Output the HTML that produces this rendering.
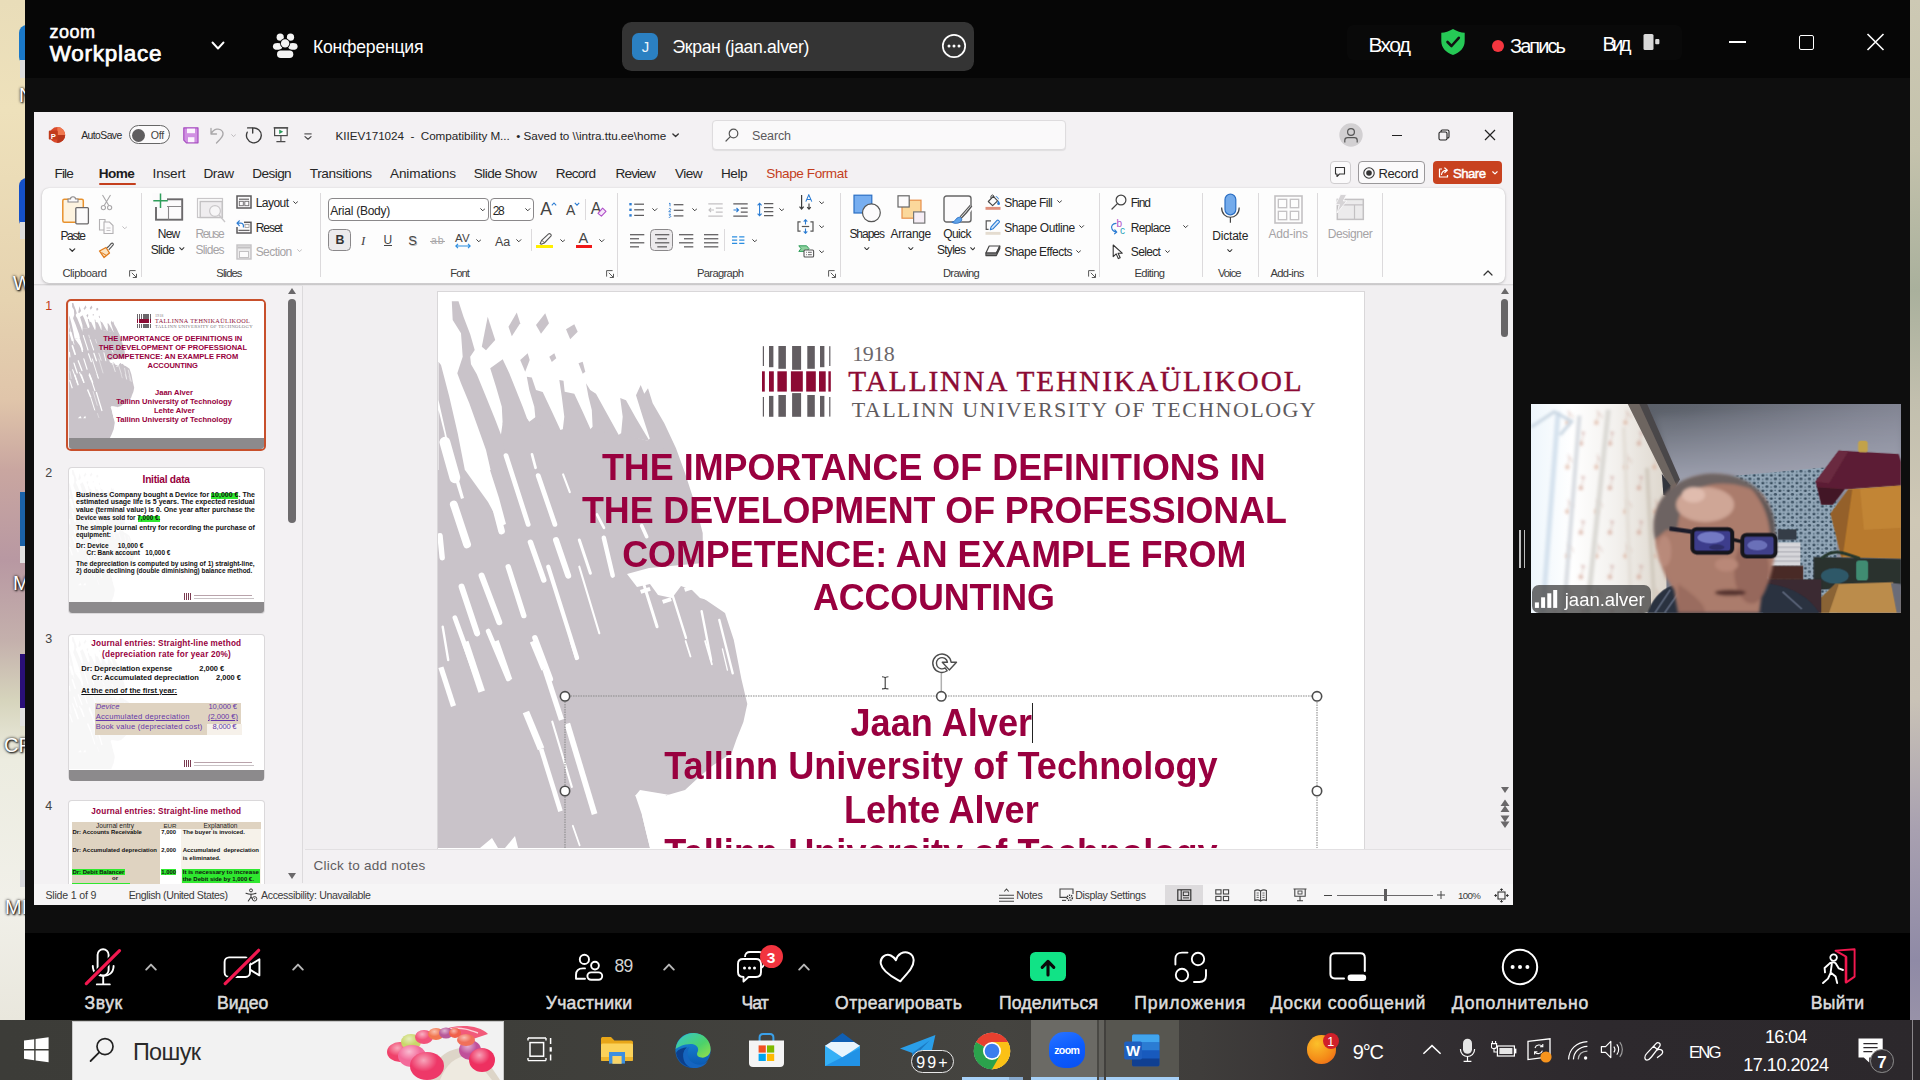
<!DOCTYPE html>
<html lang="ru"><head><meta charset="utf-8"><title>Zoom Workplace</title>
<style>
html,body{margin:0;padding:0}
body{width:1920px;height:1080px;overflow:hidden;position:relative;background:#0e0e0e;font-family:"Liberation Sans","Noto Sans CJK SC",sans-serif;}
.a{position:absolute;display:block}
.t{position:absolute;white-space:pre;}
</style></head>
<body>
<!-- p_zoom -->
<div class="a" style="left:0px;top:0px;width:26px;height:1020px;background:linear-gradient(180deg,#e9ddb9 0px,#eee1bb 110px,#e6d3b0 300px,#e0c5aa 400px,#c9a6a0 470px,#b898a2 560px,#c4b0ac 640px,#d6d4bc 700px,#ecece0 760px,#f1f0e9 900px,#e9e7dd 1020px);"></div>
<div class="a" style="left:1908px;top:0px;width:12px;height:1020px;background:linear-gradient(180deg,#cdc9b4 0px,#c4c2ac 150px,#a9b09c 290px,#c2bfae 400px,#cfc8b6 520px,#c9c2b6 700px,#a8a0b0 830px,#8f8aa6 960px,#9892a8 1020px);"></div>
<div class="a" style="left:19px;top:25px;width:8px;height:40px;background:#1a78c8;border-radius:8px 0 0 8px;"></div>
<div class="a" style="left:20px;top:60px;width:6px;height:18px;background:#dcdcdc;"></div>
<div class="t" style="left:19.00px;top:85px;font-size:20px;line-height:20px;color:#fff;text-shadow:0 0 3px #000,1px 1px 2px #000;">N</div>
<div class="a" style="left:19px;top:178px;width:8px;height:50px;background:#1450c8;border-radius:8px 0 0 8px;"></div>
<div class="a" style="left:20px;top:222px;width:6px;height:17px;background:#dcdcdc;"></div>
<div class="t" style="left:13.00px;top:273px;font-size:20px;line-height:20px;color:#fff;text-shadow:0 0 3px #000,1px 1px 2px #000;">W</div>
<div class="a" style="left:20px;top:492px;width:6px;height:54px;background:#1b62a8;"></div>
<div class="a" style="left:20px;top:546px;width:6px;height:17px;background:#e0e0e0;"></div>
<div class="t" style="left:13.00px;top:573px;font-size:20px;line-height:20px;color:#fff;text-shadow:0 0 3px #000,1px 1px 2px #000;">M</div>
<div class="a" style="left:20px;top:654px;width:6px;height:54px;background:#2a0f78;"></div>
<div class="a" style="left:20px;top:708px;width:6px;height:18px;background:#e0e0e0;"></div>
<div class="t" style="left:4.00px;top:735px;font-size:20px;line-height:20px;color:#fff;text-shadow:0 0 3px #000,1px 1px 2px #000;">CP</div>
<div class="a" style="left:20px;top:870px;width:6px;height:17px;background:#d8d8dc;"></div>
<div class="t" style="left:5.00px;top:897px;font-size:20px;line-height:20px;color:#fff;text-shadow:0 0 3px #000,1px 1px 2px #000;">MI</div>
<div class="a" style="left:25px;top:0px;width:1885px;height:1020px;background:#0e0e0e;"></div>
<div class="a" style="left:25px;top:0px;width:1885px;height:78px;background:#060606;"></div>
<div class="a" style="left:25px;top:933px;width:1885px;height:87px;background:#000;"></div>
<div class="t" style="left:49.50px;top:23px;font-size:18px;line-height:18px;color:#fff;letter-spacing:0.494px;-webkit-text-stroke:.55px #fff;">zoom</div>
<div class="t" style="left:49.80px;top:42px;font-size:22.4px;line-height:23px;color:#fff;letter-spacing:0.799px;-webkit-text-stroke:.75px #fff;">Workplace</div>
<svg class="a" style="left:210px;top:40px;" width="16" height="12" viewBox="0 0 16 12"><path d="M2.5 2.5 L8 8.5 L13.5 2.5" fill="none" stroke="#fff" stroke-width="1.9" stroke-linecap="round" stroke-linejoin="round"/></svg>
<svg class="a" style="left:272px;top:32px;" width="26" height="28" viewBox="0 0 26 28"><g fill="#f4f4f4"><circle cx="8.2" cy="5.2" r="3.6"/><circle cx="18.5" cy="5.2" r="3.6"/><ellipse cx="5.6" cy="14.4" rx="4.7" ry="3.4"/><ellipse cx="20.9" cy="14.4" rx="4.7" ry="3.4"/><circle cx="13.1" cy="11.4" r="5" fill="#060606"/><circle cx="13.1" cy="11.4" r="4.2"/><rect x="4.3" y="17.6" width="17.8" height="9" rx="4.5" fill="#060606"/><rect x="5" y="18.4" width="16.3" height="7.5" rx="3.75"/></g></svg>
<div class="t" style="left:313.00px;top:38px;font-size:17.6px;line-height:18px;color:#fff;letter-spacing:-0.227px;">Конференция</div>
<div class="a" style="left:622.3px;top:22px;width:351.5px;height:49px;background:#343434;border-radius:9.5px;"></div>
<div class="a" style="left:632.3px;top:33.4px;width:26.2px;height:26.4px;background:#2b80c2;border-radius:6.5px;"></div>
<div class="t" style="left:641.65px;top:39px;font-size:15px;line-height:15px;color:#eef4fa;">J</div>
<div class="t" style="left:672.50px;top:38px;font-size:17.6px;line-height:18px;color:#fff;letter-spacing:-0.328px;">Экран (jaan.alver)</div>
<svg class="a" style="left:940.7px;top:32.8px;" width="26" height="26" viewBox="0 0 26 26"><circle cx="13" cy="13" r="11.2" fill="none" stroke="#fff" stroke-width="1.7"/><circle cx="8" cy="13" r="1.5" fill="#fff"/><circle cx="13" cy="13" r="1.5" fill="#fff"/><circle cx="18" cy="13" r="1.5" fill="#fff"/></svg>
<div class="a" style="left:1347px;top:25px;width:335px;height:35px;background:#090909;border-radius:6px;"></div>
<div class="t" style="left:1368.50px;top:34px;font-size:21px;line-height:21px;color:#fff;letter-spacing:-1.669px;">Вход</div>
<svg class="a" style="left:1440px;top:28px;" width="26" height="28" viewBox="0 0 26 28"><path d="M13 1 C9 3.5 5 4.5 1.3 4.8 V13 C1.3 20 6 24.5 13 27 C20 24.5 24.7 20 24.7 13 V4.8 C21 4.5 17 3.5 13 1 Z" fill="#26c956"/><path d="M7.5 14 L11.5 18 L18.8 9.8" fill="none" stroke="#111" stroke-width="2.6" stroke-linecap="round" stroke-linejoin="round"/></svg>
<div class="a" style="left:1491.5px;top:39.5px;width:12px;height:12px;background:#f5363f;border-radius:50%;"></div>
<div class="t" style="left:1510.00px;top:36px;font-size:20px;line-height:20px;color:#fff;letter-spacing:-1.925px;">Запись</div>
<div class="t" style="left:1602.50px;top:34px;font-size:20px;line-height:20px;color:#fff;letter-spacing:-3.591px;">Вид</div>
<svg class="a" style="left:1643px;top:33px;" width="18" height="18" viewBox="0 0 18 18"><rect x="0.5" y="1" width="10" height="16" rx="1.5" fill="#d9d9d9"/><rect x="12.2" y="6" width="4.2" height="5.2" rx="1" fill="#d9d9d9"/></svg>
<div class="a" style="left:1728.5px;top:41.3px;width:17.5px;height:1.6px;background:#fff;"></div>
<div class="a" style="left:1799px;top:34.5px;width:15px;height:15px;background:transparent;border:1.6px solid #fff;border-radius:2px;box-sizing:border-box;"></div>
<svg class="a" style="left:1866px;top:33px;" width="20" height="18" viewBox="0 0 20 18"><path d="M1.5 1 L17.5 17 M17.5 1 L1.5 17" stroke="#fff" stroke-width="1.6" fill="none"/></svg>
<!-- p_ppt -->
<div class="a" style="left:34px;top:112px;width:1479px;height:793px;background:#f3f1f3;"></div>
<svg class="a" style="left:48px;top:126px;" width="18" height="18" viewBox="0 0 18 18"><circle cx="9.3" cy="9" r="7.9" fill="#d9492a"/><path d="M9.3 1.1 A7.9 7.9 0 0 1 17.2 9 H9.3 Z" fill="#f0784f"/><path d="M9.3 16.9 A7.9 7.9 0 0 0 17.2 9 H9.3 Z" fill="#b8371c"/><rect x="0.8" y="4.6" width="9" height="9" rx="1.2" fill="#c13b1b"/></svg><div class="t" style="left:50.77px;top:132px;font-size:7.6px;line-height:9px;color:#fff;font-weight:700;">P</div>
<div class="t" style="left:81.20px;top:130px;font-size:10.4px;line-height:11px;color:#262626;letter-spacing:-0.571px;">AutoSave</div>
<div class="a" style="left:129px;top:125px;width:41px;height:18.6px;background:#fbfafb;border:1.2px solid #666;border-radius:10px;box-sizing:border-box;"></div>
<div class="a" style="left:132.2px;top:128.5px;width:13px;height:13px;background:#5f5d5f;border-radius:50%;"></div>
<div class="t" style="left:150.70px;top:129px;font-size:10.6px;line-height:12px;color:#444;letter-spacing:-0.222px;">Off</div>
<svg class="a" style="left:182.5px;top:126.6px;" width="16" height="17" viewBox="0 0 16 17"><path d="M.8 .8 H15 V15.8 H3.4 L.8 13.2 Z" fill="#d08fe2" stroke="#a64dc0" stroke-width="1.2" stroke-linejoin="round"/><rect x="4" y="1.6" width="8" height="4.6" fill="#fbf3fd"/><rect x="5" y="10.2" width="6.4" height="5" fill="#fbf3fd"/></svg>
<svg class="a" style="left:209px;top:126px;" width="17" height="18" viewBox="0 0 17 18"><path d="M2 2.5 V8 H7.5 M2.2 7.8 C4.5 2.5 11 1.5 13.5 5.5 C15.5 9 12 12.5 7.5 17" fill="none" stroke="#a9a7a9" stroke-width="1.3" stroke-linecap="round" stroke-linejoin="round"/></svg>
<svg class="a" style="left:230.88px;top:133.86px;" width="5.248" height="3.2800000000000002" viewBox="0 0 8 5"><path d="M1 1 L4 4 L7 1" fill="none" stroke="#b5b3b5" stroke-width="1.38" stroke-linecap="round" stroke-linejoin="round"/></svg>
<svg class="a" style="left:244px;top:125px;" width="20" height="20" viewBox="0 0 20 20"><path d="M8.6 3.1 A7.4 7.4 0 1 1 3.2 7.2" fill="none" stroke="#3b3b3b" stroke-width="1.35" stroke-linecap="round"/><path d="M3.6 2.9 H8.7 V8" fill="none" stroke="#3b3b3b" stroke-width="1.35" stroke-linecap="round" stroke-linejoin="round"/></svg>
<svg class="a" style="left:272px;top:126px;" width="18" height="18" viewBox="0 0 18 18"><rect x="2.6" y="1.8" width="12.6" height="7.8" fill="#fbfafb" stroke="#4b4b4b" stroke-width="1.2"/><path d="M1.6 1.8 H16.2 M8.9 9.6 V15.4 M4.4 15.6 H13.4" stroke="#4b4b4b" stroke-width="1.2" fill="none"/><path d="M7.2 3.4 L11.2 5.7 L7.2 8 Z" fill="#2a9a5a"/></svg>
<svg class="a" style="left:302.5px;top:131.5px;" width="10" height="9" viewBox="0 0 10 9"><path d="M1.4 1.9 H8.6" stroke="#444" stroke-width="1.1"/><path d="M2 4.6 L5 7.2 L8 4.6" fill="none" stroke="#444" stroke-width="1.2" stroke-linejoin="round" stroke-linecap="round"/></svg>
<div class="t" style="left:335.50px;top:129px;font-size:11.7px;line-height:13px;color:#262626;letter-spacing:-0.033px;">KIIEV171024  -  Compatibility M...  • Saved to \\intra.ttu.ee\home</div>
<svg class="a" style="left:671.89px;top:133.25px;" width="7.216" height="4.51" viewBox="0 0 8 5"><path d="M1 1 L4 4 L7 1" fill="none" stroke="#333" stroke-width="1.4949999999999999" stroke-linecap="round" stroke-linejoin="round"/></svg>
<div class="a" style="left:711.5px;top:120px;width:354.5px;height:30px;background:#faf9fa;border:1px solid #dedcde;border-radius:4px;box-sizing:border-box;box-shadow:0 1px 1px rgba(0,0,0,.08);"></div>
<svg class="a" style="left:725px;top:128px;" width="14" height="14" viewBox="0 0 14 14"><circle cx="8.5" cy="5.5" r="4.3" fill="none" stroke="#555" stroke-width="1.2"/><path d="M5.3 8.7 L1 13" stroke="#555" stroke-width="1.2" stroke-linecap="round"/></svg>
<div class="t" style="left:752.00px;top:130px;font-size:12.5px;line-height:12px;color:#5c5a5c;letter-spacing:-0.121px;">Search</div>
<svg class="a" style="left:1339px;top:123px;" width="24" height="24" viewBox="0 0 24 24"><circle cx="12" cy="12" r="11.7" fill="#d2d0d2"/><circle cx="12" cy="9" r="3.4" fill="none" stroke="#555" stroke-width="1.2"/><path d="M5.8 19.5 V17.3 C5.8 15.5 7 14.6 8.6 14.6 H15.4 C17 14.6 18.2 15.5 18.2 17.3 V19.5" fill="none" stroke="#555" stroke-width="1.2"/></svg>
<div class="a" style="left:1392px;top:134.5px;width:10px;height:1.2px;background:#222;"></div>
<svg class="a" style="left:1438px;top:129px;" width="12" height="12" viewBox="0 0 12 12"><rect x="1" y="3" width="8" height="8" rx="1.5" fill="none" stroke="#222" stroke-width="1.1"/><path d="M3 3 V2.3 C3 1.5 3.5 1 4.3 1 H9.5 C10.4 1 11 1.6 11 2.5 V7.7 C11 8.5 10.5 9 9.7 9 H9" fill="none" stroke="#222" stroke-width="1.1"/></svg>
<svg class="a" style="left:1484px;top:129px;" width="12" height="12" viewBox="0 0 12 12"><path d="M1 1 L11 11 M11 1 L1 11" stroke="#222" stroke-width="1.2"/></svg>
<div class="t" style="left:54.60px;top:166px;font-size:13.6px;line-height:15px;color:#262626;letter-spacing:-0.905px;">File</div>
<div class="t" style="left:152.60px;top:166px;font-size:13.6px;line-height:15px;color:#262626;letter-spacing:-0.223px;">Insert</div>
<div class="t" style="left:203.40px;top:166px;font-size:13.6px;line-height:15px;color:#262626;letter-spacing:-0.379px;">Draw</div>
<div class="t" style="left:252.30px;top:166px;font-size:13.6px;line-height:15px;color:#262626;letter-spacing:-0.587px;">Design</div>
<div class="t" style="left:309.70px;top:166px;font-size:13.6px;line-height:15px;color:#262626;letter-spacing:-0.351px;">Transitions</div>
<div class="t" style="left:390.00px;top:166px;font-size:13.6px;line-height:15px;color:#262626;letter-spacing:-0.142px;">Animations</div>
<div class="t" style="left:473.80px;top:166px;font-size:13.6px;line-height:15px;color:#262626;letter-spacing:-0.538px;">Slide Show</div>
<div class="t" style="left:555.80px;top:166px;font-size:13.6px;line-height:15px;color:#262626;letter-spacing:-0.729px;">Record</div>
<div class="t" style="left:615.50px;top:166px;font-size:13.6px;line-height:15px;color:#262626;letter-spacing:-0.859px;">Review</div>
<div class="t" style="left:675.00px;top:166px;font-size:13.6px;line-height:15px;color:#262626;letter-spacing:-0.511px;">View</div>
<div class="t" style="left:721.00px;top:166px;font-size:13.6px;line-height:15px;color:#262626;letter-spacing:-0.457px;">Help</div>
<div class="t" style="left:98.70px;top:166px;font-size:13.6px;line-height:15px;color:#1c1c1c;font-weight:700;letter-spacing:-0.562px;">Home</div>
<div class="a" style="left:99px;top:182.9px;width:36.8px;height:2.1px;background:#c43e1c;border-radius:1px;"></div>
<div class="t" style="left:766.30px;top:166px;font-size:13.6px;line-height:15px;color:#c43e1c;letter-spacing:-0.434px;">Shape Format</div>
<div class="a" style="left:1329.5px;top:161px;width:21px;height:23px;background:#fbfafb;border:1px solid #cfcdcf;border-radius:4px;box-sizing:border-box;"></div>
<svg class="a" style="left:1334px;top:166px;" width="12" height="12" viewBox="0 0 12 12"><path d="M1.5 1.5 H10.5 V8 H5.5 L3 10.5 V8 H1.5 Z" fill="none" stroke="#333" stroke-width="1.1" stroke-linejoin="round"/></svg>
<div class="a" style="left:1358px;top:161px;width:67px;height:23px;background:#fbfafb;border:1px solid #9a989a;border-radius:4px;box-sizing:border-box;"></div>
<svg class="a" style="left:1363px;top:167px;" width="12" height="12" viewBox="0 0 12 12"><circle cx="6" cy="6" r="5.2" fill="none" stroke="#333" stroke-width="1.1"/><circle cx="6" cy="6" r="2.8" fill="#333"/></svg>
<div class="t" style="left:1378.50px;top:167px;font-size:13px;line-height:13px;color:#262626;letter-spacing:-0.382px;">Record</div>
<div class="a" style="left:1433px;top:161px;width:68.5px;height:23px;background:#c8421f;border-radius:4px;"></div>
<svg class="a" style="left:1437px;top:166px;" width="13" height="13" viewBox="0 0 13 13"><path d="M5 3 H2.5 V11 H10.5 V9" fill="none" stroke="#fff" stroke-width="1.2" stroke-linejoin="round"/><path d="M4.5 8.5 C5 5.5 7 4.3 9.3 4.3 M7.8 2 L10.3 4.3 L7.8 6.6" fill="none" stroke="#fff" stroke-width="1.2" stroke-linecap="round" stroke-linejoin="round"/></svg>
<div class="t" style="left:1453.00px;top:167px;font-size:13.2px;line-height:13px;color:#fff;letter-spacing:-0.556px;-webkit-text-stroke:.45px #fff;">Share</div>
<svg class="a" style="left:1491.75px;top:171.46px;" width="5.904" height="3.69" viewBox="0 0 8 5"><path d="M1 1 L4 4 L7 1" fill="none" stroke="#fff" stroke-width="1.4949999999999999" stroke-linecap="round" stroke-linejoin="round"/></svg>
<div class="a" style="left:41.5px;top:188px;width:1463px;height:95px;background:#fdfdfd;border-radius:7px;box-shadow:0 1px 3px rgba(0,0,0,.22),0 0 1px rgba(0,0,0,.15);"></div>
<div class="a" style="left:140.5px;top:193px;width:1px;height:84px;background:#dcdadc;"></div>
<div class="a" style="left:319.5px;top:193px;width:1px;height:84px;background:#dcdadc;"></div>
<div class="a" style="left:617px;top:193px;width:1px;height:84px;background:#dcdadc;"></div>
<div class="a" style="left:839.5px;top:193px;width:1px;height:84px;background:#dcdadc;"></div>
<div class="a" style="left:1099px;top:193px;width:1px;height:84px;background:#dcdadc;"></div>
<div class="a" style="left:1202.4px;top:193px;width:1px;height:84px;background:#dcdadc;"></div>
<div class="a" style="left:1258px;top:193px;width:1px;height:84px;background:#dcdadc;"></div>
<div class="a" style="left:1317px;top:193px;width:1px;height:84px;background:#dcdadc;"></div>
<div class="a" style="left:1382px;top:193px;width:1px;height:84px;background:#dcdadc;"></div>
<div class="t" style="left:62.40px;top:267px;font-size:11.2px;line-height:12px;color:#3a3a3a;letter-spacing:-0.418px;">Clipboard</div>
<div class="t" style="left:216.30px;top:267px;font-size:11.2px;line-height:12px;color:#3a3a3a;letter-spacing:-0.861px;">Slides</div>
<div class="t" style="left:450.30px;top:267px;font-size:11.2px;line-height:12px;color:#3a3a3a;letter-spacing:-0.904px;">Font</div>
<div class="t" style="left:697.00px;top:267px;font-size:11.2px;line-height:12px;color:#3a3a3a;letter-spacing:-0.663px;">Paragraph</div>
<div class="t" style="left:943.00px;top:267px;font-size:11.2px;line-height:12px;color:#3a3a3a;letter-spacing:-0.714px;">Drawing</div>
<div class="t" style="left:1134.50px;top:267px;font-size:11.2px;line-height:12px;color:#3a3a3a;letter-spacing:-0.624px;">Editing</div>
<div class="t" style="left:1218.00px;top:267px;font-size:11.2px;line-height:12px;color:#3a3a3a;letter-spacing:-0.975px;">Voice</div>
<div class="t" style="left:1270.40px;top:267px;font-size:11.2px;line-height:12px;color:#3a3a3a;letter-spacing:-0.663px;">Add-ins</div>
<svg class="a" style="left:128.7px;top:269.7px;" width="8" height="8" viewBox="0 0 8 8"><path d="M0.6 6.6 V0.6 H6.6 M2.8 2.8 L7.4 7.4 M7.5 3.8 V7.5 H3.8" fill="none" stroke="#5a5a5a" stroke-width="1"/></svg>
<svg class="a" style="left:605.7px;top:269.7px;" width="8" height="8" viewBox="0 0 8 8"><path d="M0.6 6.6 V0.6 H6.6 M2.8 2.8 L7.4 7.4 M7.5 3.8 V7.5 H3.8" fill="none" stroke="#5a5a5a" stroke-width="1"/></svg>
<svg class="a" style="left:827.7px;top:269.7px;" width="8" height="8" viewBox="0 0 8 8"><path d="M0.6 6.6 V0.6 H6.6 M2.8 2.8 L7.4 7.4 M7.5 3.8 V7.5 H3.8" fill="none" stroke="#5a5a5a" stroke-width="1"/></svg>
<svg class="a" style="left:1087.5px;top:269.7px;" width="8" height="8" viewBox="0 0 8 8"><path d="M0.6 6.6 V0.6 H6.6 M2.8 2.8 L7.4 7.4 M7.5 3.8 V7.5 H3.8" fill="none" stroke="#5a5a5a" stroke-width="1"/></svg>
<svg class="a" style="left:1483px;top:270px;" width="10" height="6" viewBox="0 0 10 6"><path d="M1 5 L5 1 L9 5" fill="none" stroke="#333" stroke-width="1.2" stroke-linecap="round" stroke-linejoin="round"/></svg>
<!-- p_ribbon -->
<svg class="a" style="left:61px;top:193px;" width="29" height="32" viewBox="0 0 29 32"><rect x="1.8" y="6.3" width="20.5" height="23" rx="1.5" fill="#fdf3e0" stroke="#e8922e" stroke-width="1.5"/><path d="M7 9 V6 H9.5 C9.5 3 14.5 3 14.5 6 H17 V9 Z" fill="#fcfbfc" stroke="#8a888a" stroke-width="1.1"/><rect x="14.8" y="14.6" width="12.6" height="16.2" rx="1" fill="#fcfbfc" stroke="#6a686a" stroke-width="1.3"/></svg>
<div class="t" style="left:60.40px;top:230px;font-size:12px;line-height:12px;color:#262626;letter-spacing:-1.272px;">Paste</div>
<svg class="a" style="left:69.22px;top:247.95px;" width="6.56" height="4.1" viewBox="0 0 8 5"><path d="M1 1 L4 4 L7 1" fill="none" stroke="#333" stroke-width="1.4949999999999999" stroke-linecap="round" stroke-linejoin="round"/></svg>
<svg class="a" style="left:100px;top:194px;" width="13" height="17" viewBox="0 0 13 17"><path d="M2.5 1 L8.8 11.5 M10.5 1 L4.2 11.5" stroke="#a9a7a9" stroke-width="1.1" fill="none"/><circle cx="3.4" cy="13.6" r="2.1" fill="none" stroke="#a9a7a9" stroke-width="1.1"/><circle cx="9.6" cy="13.6" r="2.1" fill="none" stroke="#a9a7a9" stroke-width="1.1"/></svg>
<svg class="a" style="left:98px;top:218px;" width="17" height="17" viewBox="0 0 17 17"><path d="M1.5 1.5 H7 V12 H1.5 Z" fill="none" stroke="#b3b1b3" stroke-width="1.1"/><path d="M6 4 H11.5 L15 7.5 V15.5 H6 Z" fill="#fcfbfc" stroke="#b3b1b3" stroke-width="1.1"/><path d="M8.5 10 H12.5 M8.5 12.5 H12.5" stroke="#c5c3c5" stroke-width="1"/></svg>
<svg class="a" style="left:121.51px;top:225.56px;" width="5.576" height="3.485" viewBox="0 0 8 5"><path d="M1 1 L4 4 L7 1" fill="none" stroke="#bdbbbd" stroke-width="1.38" stroke-linecap="round" stroke-linejoin="round"/></svg>
<svg class="a" style="left:98px;top:242px;" width="17" height="17" viewBox="0 0 17 17"><path d="M1.5 9 L8 5.5 L11.5 11 L6 15.5 Z" fill="#fbe3c0" stroke="#e07a1a" stroke-width="1.3" stroke-linejoin="round"/><path d="M3.5 10.5 L8.5 13.5" stroke="#e07a1a" stroke-width="1"/><path d="M9 6 L10.5 4.5 C11.5 3.5 12.5 2.2 13.6 1.3 C14.8 0.6 16 2 15 3.2 C14 4.3 12.8 5.4 11.8 6.6 L10.8 8" fill="#fcfbfc" stroke="#555" stroke-width="1.1" stroke-linejoin="round"/></svg>
<svg class="a" style="left:152px;top:192px;" width="32" height="29" viewBox="0 0 32 29"><rect x="4" y="7.3" width="26.2" height="20.4" fill="#fcfbfc" stroke="#6b696b" stroke-width="1.9"/><path d="M4 14.5 H30 M16.5 14.5 V27.5" stroke="#8a888a" stroke-width="1.1"/><rect x="0" y="1" width="15" height="14" fill="#fcfbfc"/><path d="M8.5 1.5 V16 M1.3 8.7 H15.8" stroke="#2f9e5b" stroke-width="1.5"/></svg>
<div class="t" style="left:157.80px;top:228px;font-size:12px;line-height:12px;color:#262626;letter-spacing:-0.803px;">New</div>
<div class="t" style="left:150.70px;top:244px;font-size:12px;line-height:12px;color:#262626;letter-spacing:-0.621px;">Slide</div>
<svg class="a" style="left:179.21px;top:247.46px;" width="5.576" height="3.485" viewBox="0 0 8 5"><path d="M1 1 L4 4 L7 1" fill="none" stroke="#333" stroke-width="1.4949999999999999" stroke-linecap="round" stroke-linejoin="round"/></svg>
<svg class="a" style="left:196px;top:197px;" width="31" height="28" viewBox="0 0 31 28"><rect x="1.5" y="1.5" width="25" height="19" fill="none" stroke="#c9c7c9" stroke-width="1.2"/><rect x="4.2" y="4.5" width="22" height="16" fill="#efedef" stroke="#c3c1c3" stroke-width="1.4"/><circle cx="19" cy="14" r="5.4" fill="#f7f6f7" stroke="#c9c7c9" stroke-width="1.2"/><path d="M23 18 L29 25" stroke="#c9c7c9" stroke-width="1.3"/></svg>
<div class="t" style="left:195.60px;top:228px;font-size:12px;line-height:12px;color:#a5a3a5;letter-spacing:-1.422px;">Reuse</div>
<div class="t" style="left:195.60px;top:244px;font-size:12px;line-height:12px;color:#a5a3a5;letter-spacing:-0.737px;">Slides</div>
<svg class="a" style="left:235.5px;top:194.5px;" width="16" height="14" viewBox="0 0 16 14"><rect x="1" y="1" width="14" height="12" fill="#fcfbfc" stroke="#5b595b" stroke-width="1.5"/><path d="M3 4.2 H13" stroke="#5b595b" stroke-width="1.1"/><rect x="3.3" y="6.3" width="4" height="4.4" fill="none" stroke="#6b696b" stroke-width=".9"/><rect x="8.8" y="6.3" width="4" height="4.4" fill="none" stroke="#6b696b" stroke-width=".9"/></svg>
<div class="t" style="left:255.70px;top:197px;font-size:12px;line-height:12px;color:#262626;letter-spacing:-0.546px;">Layout</div>
<svg class="a" style="left:292.68px;top:200.56px;" width="5.248" height="3.2800000000000002" viewBox="0 0 8 5"><path d="M1 1 L4 4 L7 1" fill="none" stroke="#333" stroke-width="1.4949999999999999" stroke-linecap="round" stroke-linejoin="round"/></svg>
<svg class="a" style="left:235.5px;top:219px;" width="16" height="15" viewBox="0 0 16 15"><rect x="1" y="3.3" width="14" height="10.7" fill="#fcfbfc" stroke="#5b595b" stroke-width="1.5"/><rect x="0" y="0" width="8" height="8" fill="#fcfbfc"/><path d="M2.5 11.4 H13.5" stroke="#6b696b" stroke-width="1.3"/><path d="M1.3 4.2 H5 C7.3 4.2 7.6 6.5 7.4 8 M3.3 1.8 L1 4.2 L3.3 6.6" fill="none" stroke="#2b7cd3" stroke-width="1.2" stroke-linejoin="round" stroke-linecap="round"/><rect x="9" y="5.5" width="4" height="3" fill="none" stroke="#9a989a" stroke-width=".8"/></svg>
<div class="t" style="left:255.70px;top:222px;font-size:12px;line-height:12px;color:#262626;letter-spacing:-1.037px;">Reset</div>
<svg class="a" style="left:235.5px;top:243.5px;" width="16" height="16" viewBox="0 0 16 16"><rect x="1" y="1" width="14" height="14" fill="#ecebec" stroke="#c3c1c3" stroke-width="1.4"/><path d="M1.5 3.5 H14.5" stroke="#c3c1c3" stroke-width="2"/><rect x="3.5" y="7.5" width="9" height="6" fill="#fcfbfc" stroke="#c3c1c3" stroke-width="1"/></svg>
<div class="t" style="left:255.70px;top:246px;font-size:12px;line-height:12px;color:#a5a3a5;letter-spacing:-0.571px;">Section</div>
<svg class="a" style="left:296.78px;top:249.26px;" width="5.248" height="3.2800000000000002" viewBox="0 0 8 5"><path d="M1 1 L4 4 L7 1" fill="none" stroke="#bdbbbd" stroke-width="1.4949999999999999" stroke-linecap="round" stroke-linejoin="round"/></svg>
<div class="a" style="left:327.5px;top:198.2px;width:161px;height:22.6px;background:#fff;border:1px solid #8a888a;border-radius:4px;box-sizing:border-box;"></div>
<div class="t" style="left:330.30px;top:205px;font-size:12px;line-height:12px;color:#262626;letter-spacing:-0.244px;">Arial (Body)</div>
<svg class="a" style="left:479.71px;top:208.26px;" width="5.576" height="3.485" viewBox="0 0 8 5"><path d="M1 1 L4 4 L7 1" fill="none" stroke="#333" stroke-width="1.38" stroke-linecap="round" stroke-linejoin="round"/></svg>
<div class="a" style="left:490.3px;top:198.2px;width:43.3px;height:22.6px;background:#fff;border:1px solid #8a888a;border-radius:4px;box-sizing:border-box;"></div>
<div class="t" style="left:492.80px;top:205px;font-size:12px;line-height:12px;color:#262626;letter-spacing:-1.448px;">28</div>
<svg class="a" style="left:525.21px;top:208.26px;" width="5.576" height="3.485" viewBox="0 0 8 5"><path d="M1 1 L4 4 L7 1" fill="none" stroke="#333" stroke-width="1.38" stroke-linecap="round" stroke-linejoin="round"/></svg>
<div class="t" style="left:540.20px;top:200px;font-size:17.5px;line-height:18px;color:#444;">A</div>
<svg class="a" style="left:550.5px;top:202.3px;" width="6" height="4" viewBox="0 0 6 4"><path d="M.8 3.4 L3 1 L5.2 3.4" fill="none" stroke="#2b7cd3" stroke-width="1.1"/></svg>
<div class="t" style="left:566.00px;top:203px;font-size:14px;line-height:14px;color:#444;">A</div>
<svg class="a" style="left:574.3px;top:201.8px;" width="6" height="4" viewBox="0 0 6 4"><path d="M.8 .8 L3 3.2 L5.2 .8" fill="none" stroke="#2b7cd3" stroke-width="1.1"/></svg>
<div class="a" style="left:585.3px;top:199px;width:1px;height:21px;background:#dcdadc;"></div>
<div class="t" style="left:590.80px;top:200px;font-size:16px;line-height:17px;color:#444;">A</div>
<svg class="a" style="left:597px;top:207px;" width="10" height="10" viewBox="0 0 10 10"><path d="M1 6.3 L5.6 1.2 L9 4.4 L4.4 9.2 Z" fill="#f6e6fa" stroke="#b04fc8" stroke-width="1.1" stroke-linejoin="round"/></svg>
<div class="a" style="left:327.5px;top:229.4px;width:23.3px;height:22px;background:#eceaec;border:1px solid #8a888a;border-radius:4.5px;box-sizing:border-box;"></div>
<div class="t" style="left:335.40px;top:234px;font-size:12.3px;line-height:12px;color:#333;font-weight:700;">B</div>
<div class="t" style="left:361.00px;top:234px;font-size:13px;line-height:13px;color:#444;font-family:'Liberation Serif',serif;font-style:italic;">I</div>
<div class="t" style="left:383.60px;top:234px;font-size:12px;line-height:12px;color:#444;">U</div>
<div class="a" style="left:383.5px;top:245.3px;width:8.7px;height:1px;background:#444;"></div>
<div class="t" style="left:408.20px;top:234px;font-size:13px;line-height:13px;color:#444;text-shadow:.8px .8px 0 #bbb;">S</div>
<div class="t" style="left:431.00px;top:235px;font-size:10.5px;line-height:10px;color:#a9a7a9;letter-spacing:0.820px;">ab</div>
<div class="a" style="left:430px;top:240.5px;width:15px;height:1px;background:#a9a7a9;"></div>
<div class="t" style="left:455.00px;top:232px;font-size:11.5px;line-height:12px;color:#444;letter-spacing:0.212px;">AV</div>
<svg class="a" style="left:454.5px;top:242.5px;" width="16" height="6" viewBox="0 0 16 6"><path d="M1 3 H15 M3 .8 L.8 3 L3 5.2 M13 .8 L15.2 3 L13 5.2" fill="none" stroke="#2b8de0" stroke-width="1.1"/></svg>
<svg class="a" style="left:475.81px;top:239.16px;" width="5.576" height="3.485" viewBox="0 0 8 5"><path d="M1 1 L4 4 L7 1" fill="none" stroke="#333" stroke-width="1.38" stroke-linecap="round" stroke-linejoin="round"/></svg>
<div class="t" style="left:495.00px;top:236px;font-size:12.5px;line-height:12px;color:#444;letter-spacing:0.010px;">Aa</div>
<svg class="a" style="left:516.01px;top:239.16px;" width="5.576" height="3.485" viewBox="0 0 8 5"><path d="M1 1 L4 4 L7 1" fill="none" stroke="#333" stroke-width="1.38" stroke-linecap="round" stroke-linejoin="round"/></svg>
<div class="a" style="left:531.4px;top:229.4px;width:1px;height:22px;background:#dcdadc;"></div>
<svg class="a" style="left:538px;top:232.5px;" width="15" height="12" viewBox="0 0 15 12"><path d="M2.2 10.6 L3.6 7.4 L10.6 .9 C11.8 0 13.9 1.8 12.9 3.1 L6.3 10 L3.2 11.2 Z" fill="#fcfbfc" stroke="#555" stroke-width="1.1" stroke-linejoin="round"/><path d="M3.8 7.2 L6.4 9.8" stroke="#555" stroke-width="1"/></svg>
<div class="a" style="left:536.4px;top:244.7px;width:16.4px;height:3.5px;background:#ffef00;"></div>
<svg class="a" style="left:559.71px;top:239.16px;" width="5.576" height="3.485" viewBox="0 0 8 5"><path d="M1 1 L4 4 L7 1" fill="none" stroke="#333" stroke-width="1.38" stroke-linecap="round" stroke-linejoin="round"/></svg>
<div class="t" style="left:578.60px;top:231px;font-size:14.5px;line-height:14px;color:#444;">A</div>
<div class="a" style="left:576.2px;top:244.7px;width:15.7px;height:3.5px;background:#f01818;"></div>
<svg class="a" style="left:599.21px;top:239.16px;" width="5.576" height="3.485" viewBox="0 0 8 5"><path d="M1 1 L4 4 L7 1" fill="none" stroke="#333" stroke-width="1.38" stroke-linecap="round" stroke-linejoin="round"/></svg>
<svg class="a" style="left:629px;top:202px;" width="16" height="15" viewBox="0 0 16 15"><rect x="0.3" y="1.0" width="2.4" height="2.4" fill="#2b7cd3"/><path d="M5.2 2.2 H15" stroke="#5d5b5d" stroke-width="1.25"/><rect x="0.3" y="6.6" width="2.4" height="2.4" fill="#2b7cd3"/><path d="M5.2 7.8 H15" stroke="#5d5b5d" stroke-width="1.25"/><rect x="0.3" y="12.2" width="2.4" height="2.4" fill="#2b7cd3"/><path d="M5.2 13.4 H15" stroke="#5d5b5d" stroke-width="1.25"/></svg>
<svg class="a" style="left:652.41px;top:208.46px;" width="5.576" height="3.485" viewBox="0 0 8 5"><path d="M1 1 L4 4 L7 1" fill="none" stroke="#333" stroke-width="1.38" stroke-linecap="round" stroke-linejoin="round"/></svg>
<svg class="a" style="left:668px;top:201.5px;" width="16" height="16" viewBox="0 0 16 16"><path d="M5.8 2.7 H15.4" stroke="#5d5b5d" stroke-width="1.25"/><path d="M5.8 8.3 H15.4" stroke="#5d5b5d" stroke-width="1.25"/><path d="M5.8 13.9 H15.4" stroke="#5d5b5d" stroke-width="1.25"/><path d="M1 1.8 L2 1 V4.3" fill="none" stroke="#2b7cd3" stroke-width=".9"/><path d="M.8 7 C1.4 6 3 6.3 2.6 7.6 L.8 9.8 H3" fill="none" stroke="#2b7cd3" stroke-width=".9"/><path d="M.8 12.2 H2.6 L1.6 13.6 C3.2 13.6 3.2 15.6 .8 15.4" fill="none" stroke="#2b7cd3" stroke-width=".9"/></svg>
<svg class="a" style="left:691.61px;top:208.46px;" width="5.576" height="3.485" viewBox="0 0 8 5"><path d="M1 1 L4 4 L7 1" fill="none" stroke="#333" stroke-width="1.38" stroke-linecap="round" stroke-linejoin="round"/></svg>
<svg class="a" style="left:708.3px;top:202.5px;" width="15" height="14" viewBox="0 0 15 14"><path d="M.3 .9 H14.7 M.3 13.1 H14.7 M7.8 5 H14.7 M7.8 9 H14.7" stroke="#c3c1c3" stroke-width="1.25"/><path d="M6 7 H1 M3 5 L1 7 L3 9" fill="none" stroke="#c3c1c3" stroke-width="1.1"/></svg>
<svg class="a" style="left:733px;top:202.5px;" width="15" height="14" viewBox="0 0 15 14"><path d="M.3 .9 H14.7 M.3 13.1 H14.7 M7.8 5 H14.7 M7.8 9 H14.7" stroke="#5d5b5d" stroke-width="1.25"/><path d="M.5 7 H5.5 M3.5 5 L5.5 7 L3.5 9" fill="none" stroke="#2b7cd3" stroke-width="1.1"/></svg>
<svg class="a" style="left:757px;top:202px;" width="17" height="15" viewBox="0 0 17 15"><path d="M7 1.5 H16.3 M7 5.5 H16.3 M7 9.5 H16.3 M7 13.5 H16.3" stroke="#5d5b5d" stroke-width="1.25"/><path d="M2.6 1.2 V13.8 M.6 3.4 L2.6 1.2 L4.6 3.4 M.6 11.6 L2.6 13.8 L4.6 11.6" fill="none" stroke="#2b7cd3" stroke-width="1.1"/></svg>
<svg class="a" style="left:778.61px;top:208.46px;" width="5.576" height="3.485" viewBox="0 0 8 5"><path d="M1 1 L4 4 L7 1" fill="none" stroke="#333" stroke-width="1.38" stroke-linecap="round" stroke-linejoin="round"/></svg>
<svg class="a" style="left:798.5px;top:193.5px;" width="15" height="17" viewBox="0 0 15 17"><path d="M2.6 1 V14.8 M.5 12.6 L2.6 15 L4.7 12.6" fill="none" stroke="#3d3d3d" stroke-width="1.2"/><path d="M10 9.5 V15 M8.2 13.2 L10 15.2 L11.8 13.2" fill="none" stroke="#3d3d3d" stroke-width="1.1"/><path d="M6.8 7.6 L9.8 .8 L12.8 7.6 M7.8 5.4 H11.8" fill="none" stroke="#2b7cd3" stroke-width="1.05"/></svg>
<svg class="a" style="left:818.81px;top:200.86px;" width="5.576" height="3.485" viewBox="0 0 8 5"><path d="M1 1 L4 4 L7 1" fill="none" stroke="#333" stroke-width="1.38" stroke-linecap="round" stroke-linejoin="round"/></svg>
<svg class="a" style="left:796.5px;top:218.8px;" width="17" height="15" viewBox="0 0 17 15"><path d="M3.6 2.8 H1 V12.2 H3.6 M13.4 2.8 H16 V12.2 H13.4" fill="none" stroke="#555" stroke-width="1.2"/><path d="M4.8 7.5 H12.2" stroke="#555" stroke-width="1.2"/><path d="M8.5 .8 V5.6 M8.5 9.4 V14.2 M6.7 2.6 L8.5 .7 L10.3 2.6 M6.7 12.4 L8.5 14.3 L10.3 12.4" fill="none" stroke="#2b7cd3" stroke-width="1.1"/></svg>
<svg class="a" style="left:818.81px;top:225.26px;" width="5.576" height="3.485" viewBox="0 0 8 5"><path d="M1 1 L4 4 L7 1" fill="none" stroke="#333" stroke-width="1.38" stroke-linecap="round" stroke-linejoin="round"/></svg>
<svg class="a" style="left:797.5px;top:244.5px;" width="17" height="13" viewBox="0 0 17 13"><path d="M.8 .8 H8.6 L11 3.6 L8.6 6.4 H.8 L3 3.6 Z" fill="#8fd19e" stroke="#2f9e5b" stroke-width="1"/><rect x="6" y="5" width="9.6" height="7" rx="1" fill="#fcfbfc" stroke="#555" stroke-width="1.1"/><path d="M8 7.3 H8.8 M10 7.3 H13.8 M8 9.7 H8.8 M10 9.7 H13.8" stroke="#555" stroke-width=".9"/></svg>
<svg class="a" style="left:818.81px;top:249.76px;" width="5.576" height="3.485" viewBox="0 0 8 5"><path d="M1 1 L4 4 L7 1" fill="none" stroke="#333" stroke-width="1.38" stroke-linecap="round" stroke-linejoin="round"/></svg>
<svg class="a" style="left:629.7px;top:233.6px;" width="16" height="17.2" viewBox="0 0 16 17.2"><path d="M0 0.7 H14.3" stroke="#5d5b5d" stroke-width="1.25"/><path d="M0 4.75 H9" stroke="#5d5b5d" stroke-width="1.25"/><path d="M0 8.799999999999999 H14.3" stroke="#5d5b5d" stroke-width="1.25"/><path d="M0 12.849999999999998 H9" stroke="#5d5b5d" stroke-width="1.25"/></svg>
<div class="a" style="left:650px;top:229.4px;width:23.3px;height:22px;background:#eceaec;border:1px solid #8a888a;border-radius:4.5px;box-sizing:border-box;"></div>
<svg class="a" style="left:654.6px;top:233.6px;" width="16" height="17.2" viewBox="0 0 16 17.2"><path d="M0 0.7 H14.3" stroke="#5d5b5d" stroke-width="1.25"/><path d="M2.3 4.75 H12.0" stroke="#5d5b5d" stroke-width="1.25"/><path d="M0 8.799999999999999 H14.3" stroke="#5d5b5d" stroke-width="1.25"/><path d="M2.3 12.849999999999998 H12.0" stroke="#5d5b5d" stroke-width="1.25"/></svg>
<svg class="a" style="left:679.3px;top:233.6px;" width="16" height="17.2" viewBox="0 0 16 17.2"><path d="M0 0.7 H14.3" stroke="#5d5b5d" stroke-width="1.25"/><path d="M5 4.75 H14.3" stroke="#5d5b5d" stroke-width="1.25"/><path d="M0 8.799999999999999 H14.3" stroke="#5d5b5d" stroke-width="1.25"/><path d="M5 12.849999999999998 H14.3" stroke="#5d5b5d" stroke-width="1.25"/></svg>
<svg class="a" style="left:704px;top:233.6px;" width="16" height="17.2" viewBox="0 0 16 17.2"><path d="M0 0.7 H14.3" stroke="#5d5b5d" stroke-width="1.25"/><path d="M0 4.75 H14.3" stroke="#5d5b5d" stroke-width="1.25"/><path d="M0 8.799999999999999 H14.3" stroke="#5d5b5d" stroke-width="1.25"/><path d="M0 12.849999999999998 H14.3" stroke="#5d5b5d" stroke-width="1.25"/></svg>
<div class="a" style="left:724.4px;top:229.4px;width:1px;height:22px;background:#dcdadc;"></div>
<svg class="a" style="left:732px;top:236.3px;" width="13" height="9" viewBox="0 0 13 9"><path d="M0 .8 H5.2 M0 4.1 H5.2 M0 7.4 H5.2 M7.2 .8 H12.4 M7.2 4.1 H12.4 M7.2 7.4 H12.4" stroke="#2b8de0" stroke-width="1.3"/></svg>
<svg class="a" style="left:751.71px;top:239.46px;" width="5.576" height="3.485" viewBox="0 0 8 5"><path d="M1 1 L4 4 L7 1" fill="none" stroke="#333" stroke-width="1.38" stroke-linecap="round" stroke-linejoin="round"/></svg>
<svg class="a" style="left:853px;top:194px;" width="29" height="29" viewBox="0 0 29 29"><rect x="1" y="1.2" width="17.8" height="17.8" fill="#77aef0" stroke="#2b6fc4" stroke-width="1.2"/><circle cx="18.4" cy="18.8" r="8.9" fill="#fcfbfc" stroke="#555" stroke-width="1.2"/></svg>
<div class="t" style="left:849.40px;top:228px;font-size:12px;line-height:12px;color:#262626;letter-spacing:-1.020px;">Shapes</div>
<svg class="a" style="left:864.11px;top:246.66px;" width="5.576" height="3.485" viewBox="0 0 8 5"><path d="M1 1 L4 4 L7 1" fill="none" stroke="#333" stroke-width="1.4949999999999999" stroke-linecap="round" stroke-linejoin="round"/></svg>
<svg class="a" style="left:897px;top:194.5px;" width="29" height="29" viewBox="0 0 29 29"><rect x="5" y="5.2" width="19" height="18" fill="#fbd89b" stroke="#e8904a" stroke-width="1.2"/><rect x="1" y=".8" width="11.2" height="11.2" fill="#fcfbfc" stroke="#666" stroke-width="1.2"/><rect x="16.6" y="16.9" width="11.2" height="11.2" fill="#f6eef6" stroke="#777" stroke-width="1.2"/></svg>
<div class="t" style="left:890.60px;top:228px;font-size:12px;line-height:12px;color:#262626;letter-spacing:-0.332px;">Arrange</div>
<svg class="a" style="left:908.01px;top:246.66px;" width="5.576" height="3.485" viewBox="0 0 8 5"><path d="M1 1 L4 4 L7 1" fill="none" stroke="#333" stroke-width="1.4949999999999999" stroke-linecap="round" stroke-linejoin="round"/></svg>
<svg class="a" style="left:942.5px;top:194.5px;" width="31" height="30" viewBox="0 0 31 30"><rect x="1" y="1" width="27" height="26" rx="2.5" fill="#fcfbfc" stroke="#666" stroke-width="1.4"/><path d="M28.6 11.2 C25 16 20 22 16.5 24.5" stroke="#fcfbfc" stroke-width="5" fill="none"/><path d="M28.8 11 C25.5 15.5 21.5 20 18.2 23.2" stroke="#555" stroke-width="1.3" fill="none"/><path d="M27.3 10.2 C24 14 20.3 18.3 17 21.8" stroke="#555" stroke-width="1.1" fill="none"/><path d="M8.8 27.2 C12.5 27.2 12.3 22.8 15.8 22.3 C18.3 22 19.8 24.6 17.8 26.6 C15.5 28.9 11.3 28.8 8.8 27.2 Z" fill="#5fa3ea" stroke="#2b6fc4" stroke-width=".9"/></svg>
<div class="t" style="left:943.30px;top:228px;font-size:12px;line-height:12px;color:#262626;letter-spacing:-0.644px;">Quick</div>
<div class="t" style="left:937.00px;top:244px;font-size:12px;line-height:12px;color:#262626;letter-spacing:-0.736px;">Styles</div>
<svg class="a" style="left:969.71px;top:247.06px;" width="5.576" height="3.485" viewBox="0 0 8 5"><path d="M1 1 L4 4 L7 1" fill="none" stroke="#333" stroke-width="1.4949999999999999" stroke-linecap="round" stroke-linejoin="round"/></svg>
<svg class="a" style="left:984.5px;top:193.5px;" width="16" height="16" viewBox="0 0 16 16"><path d="M3.3 7.5 L8.3 2.4 L12.6 6.8 L7.6 11.6 Z" fill="#fcfbfc" stroke="#444" stroke-width="1.1" stroke-linejoin="round"/><path d="M6.2 4.6 C5.2 2.4 6.6 .6 7.8 1 C9 1.4 9 3 8.6 4" fill="none" stroke="#444" stroke-width="1"/><path d="M13.4 6.5 C13.4 6.5 15 8.7 15 9.7 A1.4 1.4 0 0 1 12.2 9.7 C12.2 8.7 13.4 6.5 13.4 6.5 Z" fill="#2b7cd3"/><path d="M10.8 2.6 C12.4 2.8 13.2 3.8 13.4 5.2" stroke="#2b7cd3" stroke-width="1" fill="none"/><rect x=".5" y="12.9" width="15" height="2.9" fill="#e0907c"/></svg>
<div class="t" style="left:1004.20px;top:197px;font-size:12px;line-height:12px;color:#262626;letter-spacing:-0.540px;">Shape Fill</div>
<svg class="a" style="left:1057.08px;top:200.36px;" width="5.248" height="3.2800000000000002" viewBox="0 0 8 5"><path d="M1 1 L4 4 L7 1" fill="none" stroke="#333" stroke-width="1.4949999999999999" stroke-linecap="round" stroke-linejoin="round"/></svg>
<svg class="a" style="left:984.5px;top:218.5px;" width="16" height="16" viewBox="0 0 16 16"><path d="M6 1.9 H1.2 V10.4 H3.6" fill="none" stroke="#555" stroke-width="1.2"/><path d="M5.3 10.7 L6.1 7.9 L12 1.4 C13 .5 15 2.2 14.2 3.3 L8.2 9.7 Z" fill="#d6e8fb" stroke="#2b7cd3" stroke-width="1.1" stroke-linejoin="round"/><rect x=".5" y="12.9" width="15" height="2.9" fill="#e4dcd0"/></svg>
<div class="t" style="left:1004.20px;top:222px;font-size:12px;line-height:12px;color:#262626;letter-spacing:-0.413px;">Shape Outline</div>
<svg class="a" style="left:1079.38px;top:224.66px;" width="5.248" height="3.2800000000000002" viewBox="0 0 8 5"><path d="M1 1 L4 4 L7 1" fill="none" stroke="#333" stroke-width="1.4949999999999999" stroke-linecap="round" stroke-linejoin="round"/></svg>
<svg class="a" style="left:984.5px;top:245px;" width="16" height="13" viewBox="0 0 16 13"><path d="M4.2 1 H14.8 L11.4 8 H.9 Z" fill="#fcfbfc" stroke="#444" stroke-width="1.2" stroke-linejoin="round"/><path d="M.9 8 V10.6 H11.4 L14.8 3.6 V1 L11.4 8 Z" fill="#777" stroke="#444" stroke-width="1.1" stroke-linejoin="round"/></svg>
<div class="t" style="left:1004.20px;top:246px;font-size:12px;line-height:12px;color:#262626;letter-spacing:-0.516px;">Shape Effects</div>
<svg class="a" style="left:1076.18px;top:249.56px;" width="5.248" height="3.2800000000000002" viewBox="0 0 8 5"><path d="M1 1 L4 4 L7 1" fill="none" stroke="#333" stroke-width="1.4949999999999999" stroke-linecap="round" stroke-linejoin="round"/></svg>
<svg class="a" style="left:1110.5px;top:193.5px;" width="16" height="16" viewBox="0 0 16 16"><circle cx="10" cy="6" r="4.9" fill="none" stroke="#444" stroke-width="1.2"/><path d="M6.4 9.6 L1 15" stroke="#444" stroke-width="1.3" stroke-linecap="round"/></svg>
<div class="t" style="left:1130.80px;top:197px;font-size:12px;line-height:12px;color:#262626;letter-spacing:-1.048px;">Find</div>
<div class="t" style="left:1116.50px;top:218px;font-size:10px;line-height:11px;color:#b04fc8;">b</div>
<div class="t" style="left:1120.00px;top:225px;font-size:10px;line-height:11px;color:#2aa0b8;">c</div>
<svg class="a" style="left:1110px;top:222px;" width="10" height="13" viewBox="0 0 10 13"><path d="M6 1.4 C2.5 1.4 .8 4.2 2 7 C2.6 8.6 4 9.6 6.5 10 M4.8 7.8 L6.8 10 L4.6 11.8" fill="none" stroke="#2b7cd3" stroke-width="1.1" stroke-linecap="round" stroke-linejoin="round"/></svg>
<div class="t" style="left:1130.80px;top:222px;font-size:12px;line-height:12px;color:#262626;letter-spacing:-0.705px;">Replace</div>
<svg class="a" style="left:1183.38px;top:225.36px;" width="5.248" height="3.2800000000000002" viewBox="0 0 8 5"><path d="M1 1 L4 4 L7 1" fill="none" stroke="#333" stroke-width="1.4949999999999999" stroke-linecap="round" stroke-linejoin="round"/></svg>
<svg class="a" style="left:1112px;top:243.5px;" width="12" height="16" viewBox="0 0 12 16"><path d="M1.2 1 V12.6 L4.2 9.9 L6.3 14.6 L8.2 13.8 L6.1 9.2 H10.2 Z" fill="#fcfbfc" stroke="#333" stroke-width="1.1" stroke-linejoin="round"/></svg>
<div class="t" style="left:1130.80px;top:246px;font-size:12px;line-height:12px;color:#262626;letter-spacing:-0.670px;">Select</div>
<svg class="a" style="left:1164.88px;top:249.56px;" width="5.248" height="3.2800000000000002" viewBox="0 0 8 5"><path d="M1 1 L4 4 L7 1" fill="none" stroke="#333" stroke-width="1.4949999999999999" stroke-linecap="round" stroke-linejoin="round"/></svg>
<svg class="a" style="left:1220px;top:193px;" width="21" height="31" viewBox="0 0 21 31"><rect x="5" y="1.2" width="10.8" height="20.6" rx="5.4" fill="#74abeb" stroke="#2b6fc4" stroke-width="1.2"/><path d="M1.6 14.5 C1.6 27.5 19.2 27.5 19.2 14.5 M10.4 24.3 V29.8" fill="none" stroke="#444" stroke-width="1.2"/></svg>
<div class="t" style="left:1212.30px;top:230px;font-size:12px;line-height:12px;color:#262626;letter-spacing:-0.208px;">Dictate</div>
<svg class="a" style="left:1227.01px;top:248.66px;" width="5.576" height="3.485" viewBox="0 0 8 5"><path d="M1 1 L4 4 L7 1" fill="none" stroke="#333" stroke-width="1.4949999999999999" stroke-linecap="round" stroke-linejoin="round"/></svg>
<svg class="a" style="left:1273.5px;top:194.5px;" width="29" height="29" viewBox="0 0 29 29"><rect x="1" y="1" width="27" height="27" fill="none" stroke="#c3c1c3" stroke-width="1.6"/><rect x="4.3" y="4.3" width="8.4" height="8.4" fill="none" stroke="#c3c1c3" stroke-width="1.3"/><rect x="16.3" y="4.3" width="8.4" height="8.4" fill="none" stroke="#c3c1c3" stroke-width="1.3"/><rect x="4.3" y="16.3" width="8.4" height="8.4" fill="none" stroke="#c3c1c3" stroke-width="1.3"/><rect x="16.3" y="16.3" width="8.4" height="8.4" fill="none" stroke="#c3c1c3" stroke-width="1.3"/></svg>
<div class="t" style="left:1268.40px;top:228px;font-size:12px;line-height:12px;color:#a5a3a5;letter-spacing:-0.182px;">Add-ins</div>
<svg class="a" style="left:1334px;top:193.5px;" width="31" height="27" viewBox="0 0 31 27"><rect x="3.3" y="5.4" width="26" height="20" fill="#ecebec" stroke="#c3c1c3" stroke-width="1.5"/><path d="M3.5 10.8 H29 M20.5 10.8 V25" stroke="#c3c1c3" stroke-width="1.2"/><path d="M6.5 .5 H12.5 L9.3 7 H12.8 L3 19 L5.6 10.6 H1.6 Z" fill="#d6d4d6" stroke="#fcfbfc" stroke-width=".8"/></svg>
<div class="t" style="left:1327.70px;top:228px;font-size:12px;line-height:12px;color:#a5a3a5;letter-spacing:-0.432px;">Designer</div>
<!-- p_slide -->
<div class="a" style="left:303px;top:285px;width:1210px;height:599px;background:#f1eff1;"></div>
<div class="a" style="left:34px;top:284px;width:1479px;height:2px;background:linear-gradient(180deg,rgba(0,0,0,.13),rgba(0,0,0,0));"></div>
<div class="a" style="left:302px;top:286px;width:1px;height:597px;background:#dcdadc;"></div>
<div class="a" style="left:438px;top:291.5px;width:925.5px;height:557px;background:#fff;outline:1px solid #d9d7d9;"></div>
<svg class="a" style="left:438px;top:292px" width="925" height="556" viewBox="438 292 925 556"><polygon fill="#c9c3c9" points="500.2,440.0 502.7,422.5 524.3,423.3 526.8,418.3 529.3,421.7 536.0,416.7 560.2,430.0 562.7,429.2 590.2,429.2 592.7,426.7 618.5,435.0 621.0,433.3 647.7,440.8 650.2,438.3 676.0,448.3 685,473 696,507 702.7,533 703,564 700,596 725,613 733.8,640 741.4,679 747.3,704 743.4,722 736.6,739 731.7,753 712,766 698,778 685,790 666,795.6 650,794 635.4,795.6 642,815 646,832 650,848 655,870 650,900 640,925 632,942 438,942 438,470 491,470"/><polygon fill="#c9c3c9" points="451.8,301.3 458.5,301.3 463.5,316.7 470.2,334.2 474.7,350.0 470.2,356.7 471.0,364.2 476.8,374.2 486.0,396.7 494.7,418.3 501.8,436.7 506.0,456.7 509.3,471.7 491.0,471.7 486.0,450.0 477.7,426.7 469.3,403.3 461.0,383.3 457.3,373.3 462.7,356.7 461.0,333.3 452.7,320.0"/><polygon fill="#c9c3c9" points="438.5,361.7 441.0,365.0 449.3,396.7 457.7,433.3 465.2,471.7 454.3,471.7 446.0,433.3 438.5,400.0"/><polygon fill="#c9c3c9" points="438.5,410.0 444.3,433.3 451.3,471.7 438.5,471.7"/><polygon fill="#c9c3c9" points="490.2,368.3 502.7,359.2 509.3,373.3 516.0,390.0 522.7,406.7 527.3,419.2 529.3,424.2 502.7,424.2 501.8,406.7 496.0,386.7"/><polygon fill="#c9c3c9" points="526.8,376.7 531.8,377.5 536.0,390.0 542.7,392.0 552.7,413.3 561.0,431.3 536.0,424.2 534.3,406.7 529.3,390.0"/><polygon fill="#c9c3c9" points="559.3,380.0 563.5,380.8 564.7,391.7 574.3,393.7 582.7,411.7 591.0,430.3 562.7,430.3 564.3,416.7 561.8,396.7"/><polygon fill="#c9c3c9" points="586.0,383.3 590.2,390.0 596.0,393.7 607.7,415.0 619.3,436.0 592.7,428.7 591.8,410.0 588.5,396.7"/><polygon fill="#c9c3c9" points="620.2,398.0 626.0,400.3 636.0,418.3 649.7,441.3 621.0,434.7 622.7,416.7"/><polygon fill="#c9c3c9" points="636.0,395.3 640.7,385.0 644.3,393.7 648.0,388.3 652.7,403.3 664.3,423.3 676.0,448.3 676.0,456.7 650.2,439.7 642.7,416.7"/><polygon fill="#c9c3c9" points="481.8,346.7 487.7,316.7 495.2,340.0 486.0,350.3"/><polygon fill="#c9c3c9" points="508.5,326.7 516.8,312.5 520.2,323.3 511.8,336.2"/><polygon fill="#c9c3c9" points="536.0,325.0 545.2,313.3 549.0,323.3 541.0,333.7"/><polygon fill="#c9c3c9" points="566.0,329.2 574.3,324.2 577.7,331.7 570.2,339.3"/><polygon fill="#c9c3c9" points="520.2,360.0 527.7,353.3 529.7,360.0 525.2,371.7"/><polygon fill="#c9c3c9" points="549.3,356.7 554.3,353.3 556.3,358.3 551.8,362.0"/><polygon fill="#c9c3c9" points="578.5,363.3 582.7,361.7 585.3,371.7 582.7,373.7"/><polygon fill="#fff" points="465,470 490,470 499,498 506,524 501,526 488,502"/><polygon fill="#fff" points="452,470 456,470 464,498 461,499"/><path d="M444.9 442.2 L454.9 477.8" stroke="#fff" stroke-width="10.8" stroke-linecap="round"/><path d="M470.4 440.0 L481.6 468.9" stroke="#fff" stroke-width="8.4" stroke-linecap="round"/><path d="M488.2 480.0 L501.6 531.1" stroke="#fff" stroke-width="6.6" stroke-linecap="round"/><path d="M453.8 504.4 L467.1 544.4" stroke="#fff" stroke-width="7.8" stroke-linecap="round"/><path d="M506.0 455.6 L528.2 524.4" stroke="#fff" stroke-width="4.8" stroke-linecap="round"/><path d="M532.0 454.4 L535.6 467.8" stroke="#fff" stroke-width="2.7" stroke-linecap="round"/><path d="M538.2 475.6 L554.9 524.4" stroke="#fff" stroke-width="4.8" stroke-linecap="round"/><path d="M563.1 474.4 L569.8 492.2" stroke="#fff" stroke-width="2.1" stroke-linecap="round"/><path d="M440.0 535.6 L442.2 557.8" stroke="#fff" stroke-width="5.4" stroke-linecap="round"/><path d="M530.4 542.2 L543.8 580.0" stroke="#fff" stroke-width="5.4" stroke-linecap="round"/><path d="M556.0 540.0 L568.2 575.6" stroke="#fff" stroke-width="6.0" stroke-linecap="round"/><path d="M579.3 540.0 L590.4 573.3" stroke="#fff" stroke-width="3.0" stroke-linecap="round"/><path d="M603.8 537.8 L612.7 575.6" stroke="#fff" stroke-width="4.5" stroke-linecap="round"/><path d="M508.2 566.7 L523.8 615.6" stroke="#fff" stroke-width="5.4" stroke-linecap="round"/><path d="M481.6 575.6 L499.3 622.2" stroke="#fff" stroke-width="6.0" stroke-linecap="round"/><path d="M461.6 586.7 L477.1 633.3" stroke="#fff" stroke-width="6.0" stroke-linecap="round"/><path d="M548.2 566.7 L577.1 657.8" stroke="#fff" stroke-width="4.2" stroke-linecap="round"/><path d="M579.3 566.7 L599.3 633.3" stroke="#fff" stroke-width="2.1" stroke-linecap="round"/><path d="M454.9 617.8 L477.1 678.9" stroke="#fff" stroke-width="4.8" stroke-linecap="round"/><path d="M442.7 626.7 L448.2 660.0" stroke="#fff" stroke-width="2.4" stroke-linecap="round"/><path d="M534.9 637.8 L550.4 678.9" stroke="#fff" stroke-width="5.4" stroke-linecap="round"/><path d="M488.2 631.1 L508.2 678.9" stroke="#fff" stroke-width="4.8" stroke-linecap="round"/><path d="M643.8 584.4 L657.1 626.7" stroke="#fff" stroke-width="3.0" stroke-linecap="round"/><path d="M672.7 595.6 L686.0 637.8" stroke="#fff" stroke-width="2.4" stroke-linecap="round"/><path d="M701.6 611.1 L711.1 660.0" stroke="#fff" stroke-width="2.4" stroke-linecap="round"/><path d="M719.3 620.0 L732.7 673.3" stroke="#fff" stroke-width="2.4" stroke-linecap="round"/><path d="M641.6 525.6 L646.7 536.7" stroke="#fff" stroke-width="3.6" stroke-linecap="round"/><path d="M596.9 514.4 L604.0 527.8" stroke="#fff" stroke-width="2.7" stroke-linecap="round"/><path d="M440.9 667.2 L453.5 706.1" stroke="#fff" stroke-width="5.3" stroke-linecap="butt"/><path d="M465.2 641.9 L481.7 691.6" stroke="#fff" stroke-width="6.8" stroke-linecap="butt"/><path d="M495.9 641.0 L509.5 679.9" stroke="#fff" stroke-width="5.8" stroke-linecap="butt"/><path d="M533.3 641.0 L544.9 669.2" stroke="#fff" stroke-width="7.4" stroke-linecap="butt"/><path d="M544.9 669.2 L561.5 719.8" stroke="#fff" stroke-width="5.3" stroke-linecap="butt"/><path d="M571.2 641.0 L576.5 658.5" stroke="#fff" stroke-width="3.2" stroke-linecap="round"/><path d="M525.9 712.0 L541.1 748.9" stroke="#fff" stroke-width="6.8" stroke-linecap="butt"/><path d="M541.1 748.9 L560.5 811.2" stroke="#fff" stroke-width="4.7" stroke-linecap="butt"/><path d="M552.3 721.7 L571.8 786.9" stroke="#fff" stroke-width="2.1" stroke-linecap="round"/><path d="M567.3 723.7 L594.6 814.1" stroke="#fff" stroke-width="5.8" stroke-linecap="butt"/><path d="M572.8 825.8 L579.6 845.3" stroke="#fff" stroke-width="1.8" stroke-linecap="round"/><path d="M685.6 641.0 L690.5 656.5" stroke="#fff" stroke-width="1.8" stroke-linecap="round"/><path d="M705.1 641.0 L711.9 664.3" stroke="#fff" stroke-width="1.8" stroke-linecap="round"/><path d="M722.4 648.8 L727.4 670.2" stroke="#fff" stroke-width="1.3" stroke-linecap="round"/><polygon fill="#fff" points="627,574 649,568 703,563 722,604 700,598 692,590 681,586 672,598 658,595 650,584 637,587"/><rect x="640" y="590" width="10" height="4" fill="#fff" transform="rotate(-18 640 590)"/><rect x="662" y="600" width="9" height="4" fill="#fff" transform="rotate(-18 662 600)"/><rect x="684" y="588" width="8" height="4" fill="#fff" transform="rotate(-18 684 588)"/><polygon fill="#fff" points="635,796 664,803 666,795 690,800 660,808 642,815 650,848 676,848 700,800 640,790"/><polygon fill="#fff" points="480,848 492,838 498,848"/><polygon fill="#fff" points="505,848 515,836 518,848"/></svg>
<svg class="a" style="left:760px;top:344px" width="74" height="75" viewBox="760 344 74 75"><rect x="762.8" y="346.2" width="1.2" height="19.8" fill="#625d61"/><rect x="769" y="346" width="4.4" height="21.2" fill="#625d61"/><rect x="778.4" y="346" width="7.5" height="22.8" fill="#625d61"/><rect x="792.1" y="346" width="9" height="23.8" fill="#625d61"/><rect x="807.3" y="346" width="7.5" height="22.8" fill="#625d61"/><rect x="820" y="346" width="4.4" height="21.2" fill="#625d61"/><rect x="829.2" y="346.2" width="1.2" height="19.8" fill="#625d61"/><rect x="762" y="371.3" width="2.8" height="20.3" fill="#8c0a34"/><rect x="769" y="371.3" width="4.8" height="20.3" fill="#8c0a34"/><rect x="777.4" y="371.3" width="9.4" height="20.3" fill="#8c0a34"/><rect x="790.9" y="371.3" width="11.9" height="20.3" fill="#8c0a34"/><rect x="806.2" y="371.3" width="9.6" height="20.3" fill="#8c0a34"/><rect x="819" y="371.3" width="6.7" height="20.3" fill="#8c0a34"/><rect x="828.4" y="371.3" width="2.4" height="20.3" fill="#8c0a34"/><rect x="762.8" y="397" width="1.2" height="19.6" fill="#625d61"/><rect x="769" y="395.9" width="4.4" height="20.9" fill="#625d61"/><rect x="778.4" y="395" width="7.5" height="21.8" fill="#625d61"/><rect x="792.1" y="393.1" width="9" height="23.7" fill="#625d61"/><rect x="807.3" y="395" width="7.5" height="21.8" fill="#625d61"/><rect x="820" y="395.9" width="4.4" height="20.9" fill="#625d61"/><rect x="829.2" y="397" width="1.2" height="19.6" fill="#625d61"/></svg>
<div class="t" style="left:852.30px;top:342px;font-size:22px;line-height:23px;color:#6b676a;font-family:'Liberation Serif',serif;letter-spacing:-0.500px;">1918</div>
<div class="t" style="left:848.30px;top:366px;font-size:29.3px;line-height:30px;color:#8c0a34;font-family:'Liberation Serif',serif;letter-spacing:1.913px;-webkit-text-stroke:.4px #8c0a34;">TALLINNA TEHNIKAÜLIKOOL</div>
<div class="t" style="left:851.70px;top:398px;font-size:22px;line-height:23px;color:#5f5b5e;font-family:'Liberation Serif',serif;letter-spacing:1.443px;">TALLINN UNIVERSITY OF TECHNOLOGY</div>
<div class="t" style="left:601.90px;top:450px;font-size:35.85px;line-height:36px;color:#99003f;font-weight:700;letter-spacing:0.049px;transform-origin:0 30px;transform:scaleY(1.055);">THE IMPORTANCE OF DEFINITIONS IN</div>
<div class="t" style="left:582.00px;top:493px;font-size:35.85px;line-height:36px;color:#99003f;font-weight:700;letter-spacing:-0.060px;transform-origin:0 30px;transform:scaleY(1.055);">THE DEVELOPMENT OF PROFESSIONAL</div>
<div class="t" style="left:622.20px;top:537px;font-size:35.85px;line-height:36px;color:#99003f;font-weight:700;letter-spacing:0.016px;transform-origin:0 30px;transform:scaleY(1.055);">COMPETENCE: AN EXAMPLE FROM</div>
<div class="t" style="left:813.00px;top:580px;font-size:35.85px;line-height:36px;color:#99003f;font-weight:700;letter-spacing:-0.108px;transform-origin:0 30px;transform:scaleY(1.055);">ACCOUNTING</div>
<svg class="a" style="left:555px;top:650px" width="775" height="198" viewBox="555 650 775 198"><path d="M565 848 V696 H1317 V848" fill="none" stroke="#8c8c8c" stroke-width="1.1" stroke-dasharray="1.6 0.9"/><path d="M941.3 673 V691" stroke="#b0b0b0" stroke-width="1.5"/><circle cx="565" cy="696.3" r="4.7" fill="#fff" stroke="#4d4d4d" stroke-width="1.6"/><circle cx="941.3" cy="696.3" r="4.7" fill="#fff" stroke="#4d4d4d" stroke-width="1.6"/><circle cx="1317" cy="696.3" r="4.7" fill="#fff" stroke="#4d4d4d" stroke-width="1.6"/><circle cx="565" cy="791" r="4.7" fill="#fff" stroke="#4d4d4d" stroke-width="1.6"/><circle cx="1317" cy="791" r="4.7" fill="#fff" stroke="#4d4d4d" stroke-width="1.6"/><path d="M947.2 670.8 A9.2 9.2 0 1 1 951.1 662.3 L956.5 662.3 L949.3 669.9 L942.3 662.3 L947.5 662.3 A5.6 5.6 0 1 0 945.1 667.9 Z" fill="#fff" stroke="#4d4d4d" stroke-width="1.4" stroke-linejoin="round"/></svg>
<div class="t" style="left:850.50px;top:705px;font-size:36.1px;line-height:37px;color:#99003f;font-weight:700;letter-spacing:0.047px;transform-origin:0 31px;transform:scaleY(1.05);">Jaan Alver</div>
<div class="t" style="left:664.20px;top:748px;font-size:36.1px;line-height:37px;color:#99003f;font-weight:700;letter-spacing:0.050px;transform-origin:0 31px;transform:scaleY(1.05);">Tallinn University of Technology</div>
<div class="t" style="left:844.00px;top:792px;font-size:36.1px;line-height:37px;color:#99003f;font-weight:700;letter-spacing:-0.048px;transform-origin:0 31px;transform:scaleY(1.05);">Lehte Alver</div>
<div class="a" style="left:600px;top:830px;width:700px;height:17.5px;overflow:hidden"><div class="t" style="left:64.20px;top:5px;font-size:36.1px;line-height:37px;color:#99003f;font-weight:700;letter-spacing:0.050px;transform-origin:0 31px;transform:scaleY(1.05);">Tallinn University of Technology</div></div>
<div class="a" style="left:1032.3px;top:703px;width:1.1px;height:40px;background:#222;"></div>
<svg class="a" style="left:880px;top:674px;" width="10" height="18" viewBox="0 0 10 18"><path d="M2 2.7 C3.6 2.7 5 3 5.2 3.8 C5.4 3 6.8 2.7 8.4 2.7 M5.2 3.4 V14.2 M2 14.9 C3.6 14.9 5 14.6 5.2 13.8 C5.4 14.6 6.8 14.9 8.4 14.9" fill="none" stroke="#3a3a3a" stroke-width="1.1"/></svg>
<div class="a" style="left:303px;top:848.5px;width:1210px;height:35.5px;background:#f3f1f3;"></div>
<div class="a" style="left:305px;top:849px;width:1206px;height:1px;background:#e2e0e2;"></div>
<div class="t" style="left:313.60px;top:858px;font-size:13.5px;line-height:15px;color:#5f5d5f;letter-spacing:0.258px;">Click to add notes</div>
<svg class="a" style="left:1500px;top:287px;" width="10" height="8" viewBox="0 0 10 8"><path d="M5 1 L9 7 H1 Z" fill="#6a686a"/></svg>
<div class="a" style="left:1501px;top:299.3px;width:7.4px;height:38px;background:#676567;border-radius:3.7px;"></div>
<svg class="a" style="left:1500px;top:786px;" width="10" height="8" viewBox="0 0 10 8"><path d="M1 1 H9 L5 7 Z" fill="#6a686a"/></svg>
<svg class="a" style="left:1499.5px;top:799px;" width="10" height="14" viewBox="0 0 10 14"><path d="M5 .5 L9.5 7 H.5 Z M5 6.5 L9.5 13 H.5 Z" fill="#6a686a"/></svg>
<svg class="a" style="left:1499.5px;top:815px;" width="10" height="14" viewBox="0 0 10 14"><path d="M.5 .5 H9.5 L5 7 Z M.5 6.5 H9.5 L5 13 Z" fill="#6a686a"/></svg>
<!-- p_thumbs -->
<div class="a" style="left:34px;top:286px;width:268px;height:598px;background:#f3f1f3;"></div>
<svg class="a" style="left:286.5px;top:287px;" width="10" height="8" viewBox="0 0 10 8"><path d="M5 1 L9 7 H1 Z" fill="#6a686a"/></svg>
<div class="a" style="left:287.8px;top:299px;width:8px;height:224px;background:#6d6b6d;border-radius:4px;"></div>
<svg class="a" style="left:286.5px;top:872px;" width="10" height="8" viewBox="0 0 10 8"><path d="M1 1 H9 L5 7 Z" fill="#6a686a"/></svg>
<div class="t" style="left:45.30px;top:300px;font-size:12.5px;line-height:12px;color:#c43e1c;">1</div>
<div class="t" style="left:45.30px;top:467px;font-size:12.5px;line-height:12px;color:#444;">2</div>
<div class="t" style="left:45.30px;top:633px;font-size:12.5px;line-height:12px;color:#444;">3</div>
<div class="t" style="left:45.30px;top:800px;font-size:12.5px;line-height:12px;color:#444;">4</div>
<div class="a" style="left:65.5px;top:299px;width:200.5px;height:152px;background:transparent;border:2px solid #c8502c;border-radius:5px;box-sizing:border-box;"></div>
<div class="a" style="left:68.5px;top:301.3px;width:195px;height:147.7px;background:#fff;border-radius:3px;"></div>
<svg class="a" style="left:68.5px;top:301.3px" width="195" height="137" viewBox="438 292 925 650"><polygon fill="#c9c3c9" points="500.2,440.0 502.7,422.5 524.3,423.3 526.8,418.3 529.3,421.7 536.0,416.7 560.2,430.0 562.7,429.2 590.2,429.2 592.7,426.7 618.5,435.0 621.0,433.3 647.7,440.8 650.2,438.3 676.0,448.3 685,473 696,507 702.7,533 703,564 700,596 725,613 733.8,640 741.4,679 747.3,704 743.4,722 736.6,739 731.7,753 712,766 698,778 685,790 666,795.6 650,794 635.4,795.6 642,815 646,832 650,848 655,870 650,900 640,925 632,942 438,942 438,470 491,470"/><polygon fill="#c9c3c9" points="451.8,301.3 458.5,301.3 463.5,316.7 470.2,334.2 474.7,350.0 470.2,356.7 471.0,364.2 476.8,374.2 486.0,396.7 494.7,418.3 501.8,436.7 506.0,456.7 509.3,471.7 491.0,471.7 486.0,450.0 477.7,426.7 469.3,403.3 461.0,383.3 457.3,373.3 462.7,356.7 461.0,333.3 452.7,320.0"/><polygon fill="#c9c3c9" points="438.5,361.7 441.0,365.0 449.3,396.7 457.7,433.3 465.2,471.7 454.3,471.7 446.0,433.3 438.5,400.0"/><polygon fill="#c9c3c9" points="438.5,410.0 444.3,433.3 451.3,471.7 438.5,471.7"/><polygon fill="#c9c3c9" points="490.2,368.3 502.7,359.2 509.3,373.3 516.0,390.0 522.7,406.7 527.3,419.2 529.3,424.2 502.7,424.2 501.8,406.7 496.0,386.7"/><polygon fill="#c9c3c9" points="526.8,376.7 531.8,377.5 536.0,390.0 542.7,392.0 552.7,413.3 561.0,431.3 536.0,424.2 534.3,406.7 529.3,390.0"/><polygon fill="#c9c3c9" points="559.3,380.0 563.5,380.8 564.7,391.7 574.3,393.7 582.7,411.7 591.0,430.3 562.7,430.3 564.3,416.7 561.8,396.7"/><polygon fill="#c9c3c9" points="586.0,383.3 590.2,390.0 596.0,393.7 607.7,415.0 619.3,436.0 592.7,428.7 591.8,410.0 588.5,396.7"/><polygon fill="#c9c3c9" points="620.2,398.0 626.0,400.3 636.0,418.3 649.7,441.3 621.0,434.7 622.7,416.7"/><polygon fill="#c9c3c9" points="636.0,395.3 640.7,385.0 644.3,393.7 648.0,388.3 652.7,403.3 664.3,423.3 676.0,448.3 676.0,456.7 650.2,439.7 642.7,416.7"/><polygon fill="#c9c3c9" points="481.8,346.7 487.7,316.7 495.2,340.0 486.0,350.3"/><polygon fill="#c9c3c9" points="508.5,326.7 516.8,312.5 520.2,323.3 511.8,336.2"/><polygon fill="#c9c3c9" points="536.0,325.0 545.2,313.3 549.0,323.3 541.0,333.7"/><polygon fill="#c9c3c9" points="566.0,329.2 574.3,324.2 577.7,331.7 570.2,339.3"/><polygon fill="#c9c3c9" points="520.2,360.0 527.7,353.3 529.7,360.0 525.2,371.7"/><polygon fill="#c9c3c9" points="549.3,356.7 554.3,353.3 556.3,358.3 551.8,362.0"/><polygon fill="#c9c3c9" points="578.5,363.3 582.7,361.7 585.3,371.7 582.7,373.7"/><polygon fill="#fff" points="465,470 490,470 499,498 506,524 501,526 488,502"/><polygon fill="#fff" points="452,470 456,470 464,498 461,499"/><path d="M444.9 442.2 L454.9 477.8" stroke="#fff" stroke-width="10.8" stroke-linecap="round"/><path d="M470.4 440.0 L481.6 468.9" stroke="#fff" stroke-width="8.4" stroke-linecap="round"/><path d="M488.2 480.0 L501.6 531.1" stroke="#fff" stroke-width="6.6" stroke-linecap="round"/><path d="M453.8 504.4 L467.1 544.4" stroke="#fff" stroke-width="7.8" stroke-linecap="round"/><path d="M506.0 455.6 L528.2 524.4" stroke="#fff" stroke-width="4.8" stroke-linecap="round"/><path d="M532.0 454.4 L535.6 467.8" stroke="#fff" stroke-width="2.7" stroke-linecap="round"/><path d="M538.2 475.6 L554.9 524.4" stroke="#fff" stroke-width="4.8" stroke-linecap="round"/><path d="M563.1 474.4 L569.8 492.2" stroke="#fff" stroke-width="2.1" stroke-linecap="round"/><path d="M440.0 535.6 L442.2 557.8" stroke="#fff" stroke-width="5.4" stroke-linecap="round"/><path d="M530.4 542.2 L543.8 580.0" stroke="#fff" stroke-width="5.4" stroke-linecap="round"/><path d="M556.0 540.0 L568.2 575.6" stroke="#fff" stroke-width="6.0" stroke-linecap="round"/><path d="M579.3 540.0 L590.4 573.3" stroke="#fff" stroke-width="3.0" stroke-linecap="round"/><path d="M603.8 537.8 L612.7 575.6" stroke="#fff" stroke-width="4.5" stroke-linecap="round"/><path d="M508.2 566.7 L523.8 615.6" stroke="#fff" stroke-width="5.4" stroke-linecap="round"/><path d="M481.6 575.6 L499.3 622.2" stroke="#fff" stroke-width="6.0" stroke-linecap="round"/><path d="M461.6 586.7 L477.1 633.3" stroke="#fff" stroke-width="6.0" stroke-linecap="round"/><path d="M548.2 566.7 L577.1 657.8" stroke="#fff" stroke-width="4.2" stroke-linecap="round"/><path d="M579.3 566.7 L599.3 633.3" stroke="#fff" stroke-width="2.1" stroke-linecap="round"/><path d="M454.9 617.8 L477.1 678.9" stroke="#fff" stroke-width="4.8" stroke-linecap="round"/><path d="M442.7 626.7 L448.2 660.0" stroke="#fff" stroke-width="2.4" stroke-linecap="round"/><path d="M534.9 637.8 L550.4 678.9" stroke="#fff" stroke-width="5.4" stroke-linecap="round"/><path d="M488.2 631.1 L508.2 678.9" stroke="#fff" stroke-width="4.8" stroke-linecap="round"/><path d="M643.8 584.4 L657.1 626.7" stroke="#fff" stroke-width="3.0" stroke-linecap="round"/><path d="M672.7 595.6 L686.0 637.8" stroke="#fff" stroke-width="2.4" stroke-linecap="round"/><path d="M701.6 611.1 L711.1 660.0" stroke="#fff" stroke-width="2.4" stroke-linecap="round"/><path d="M719.3 620.0 L732.7 673.3" stroke="#fff" stroke-width="2.4" stroke-linecap="round"/><path d="M641.6 525.6 L646.7 536.7" stroke="#fff" stroke-width="3.6" stroke-linecap="round"/><path d="M596.9 514.4 L604.0 527.8" stroke="#fff" stroke-width="2.7" stroke-linecap="round"/><path d="M440.9 667.2 L453.5 706.1" stroke="#fff" stroke-width="5.3" stroke-linecap="butt"/><path d="M465.2 641.9 L481.7 691.6" stroke="#fff" stroke-width="6.8" stroke-linecap="butt"/><path d="M495.9 641.0 L509.5 679.9" stroke="#fff" stroke-width="5.8" stroke-linecap="butt"/><path d="M533.3 641.0 L544.9 669.2" stroke="#fff" stroke-width="7.4" stroke-linecap="butt"/><path d="M544.9 669.2 L561.5 719.8" stroke="#fff" stroke-width="5.3" stroke-linecap="butt"/><path d="M571.2 641.0 L576.5 658.5" stroke="#fff" stroke-width="3.2" stroke-linecap="round"/><path d="M525.9 712.0 L541.1 748.9" stroke="#fff" stroke-width="6.8" stroke-linecap="butt"/><path d="M541.1 748.9 L560.5 811.2" stroke="#fff" stroke-width="4.7" stroke-linecap="butt"/><path d="M552.3 721.7 L571.8 786.9" stroke="#fff" stroke-width="2.1" stroke-linecap="round"/><path d="M567.3 723.7 L594.6 814.1" stroke="#fff" stroke-width="5.8" stroke-linecap="butt"/><path d="M572.8 825.8 L579.6 845.3" stroke="#fff" stroke-width="1.8" stroke-linecap="round"/><path d="M685.6 641.0 L690.5 656.5" stroke="#fff" stroke-width="1.8" stroke-linecap="round"/><path d="M705.1 641.0 L711.9 664.3" stroke="#fff" stroke-width="1.8" stroke-linecap="round"/><path d="M722.4 648.8 L727.4 670.2" stroke="#fff" stroke-width="1.3" stroke-linecap="round"/><polygon fill="#fff" points="627,574 649,568 703,563 722,604 700,598 692,590 681,586 672,598 658,595 650,584 637,587"/><rect x="640" y="590" width="10" height="4" fill="#fff" transform="rotate(-18 640 590)"/><rect x="662" y="600" width="9" height="4" fill="#fff" transform="rotate(-18 662 600)"/><rect x="684" y="588" width="8" height="4" fill="#fff" transform="rotate(-18 684 588)"/><polygon fill="#fff" points="635,796 664,803 666,795 690,800 660,808 642,815 650,848 676,848 700,800 640,790"/><polygon fill="#fff" points="480,848 492,838 498,848"/><polygon fill="#fff" points="505,848 515,836 518,848"/></svg>
<div class="a" style="left:136.7px;top:314px;width:14px;height:4.6px;background:repeating-linear-gradient(90deg,#6b666a 0 1.3px,#fff 1.3px 2.1px);"></div>
<div class="a" style="left:136.5px;top:319px;width:14.4px;height:4.2px;background:repeating-linear-gradient(90deg,#8c0a34 0 1.5px,#fff 1.5px 2.1px);"></div>
<div class="a" style="left:136.7px;top:323.6px;width:14px;height:4.6px;background:repeating-linear-gradient(90deg,#6b666a 0 1.3px,#fff 1.3px 2.1px);"></div>
<div class="t" style="left:155.00px;top:313px;font-size:4.2px;line-height:5px;color:#8a8688;font-family:'Liberation Serif',serif;">1918</div>
<div class="t" style="left:155.00px;top:317px;font-size:6.2px;line-height:7px;color:#8c0a34;font-family:'Liberation Serif',serif;letter-spacing:0.362px;">TALLINNA TEHNIKAÜLIKOOL</div>
<div class="t" style="left:155.00px;top:324px;font-size:4.7px;line-height:5px;color:#77737a;font-family:'Liberation Serif',serif;letter-spacing:0.265px;">TALLINN UNIVERSITY OF TECHNOLOGY</div>
<div class="t" style="left:103.20px;top:334px;font-size:7.55px;line-height:9px;color:#97003d;font-weight:700;letter-spacing:-0.011px;">THE IMPORTANCE OF DEFINITIONS IN</div>
<div class="t" style="left:98.70px;top:343px;font-size:7.55px;line-height:9px;color:#97003d;font-weight:700;letter-spacing:-0.014px;">THE DEVELOPMENT OF PROFESSIONAL</div>
<div class="t" style="left:107.00px;top:352px;font-size:7.55px;line-height:9px;color:#97003d;font-weight:700;letter-spacing:-0.005px;">COMPETENCE: AN EXAMPLE FROM</div>
<div class="t" style="left:147.60px;top:361px;font-size:7.55px;line-height:9px;color:#97003d;font-weight:700;letter-spacing:-0.086px;">ACCOUNTING</div>
<div class="t" style="left:155.00px;top:388px;font-size:7.6px;line-height:9px;color:#97003d;font-weight:700;letter-spacing:-0.018px;">Jaan Alver</div>
<div class="t" style="left:116.20px;top:397px;font-size:7.6px;line-height:9px;color:#97003d;font-weight:700;letter-spacing:-0.015px;">Tallinn University of Technology</div>
<div class="t" style="left:153.90px;top:406px;font-size:7.6px;line-height:9px;color:#97003d;font-weight:700;letter-spacing:-0.031px;">Lehte Alver</div>
<div class="t" style="left:116.20px;top:415px;font-size:7.6px;line-height:9px;color:#97003d;font-weight:700;letter-spacing:-0.015px;">Tallinn University of Technology</div>
<div class="a" style="left:68.5px;top:438px;width:195px;height:11px;background:#8c8a8c;border-radius:0 0 3px 3px;"></div>
<div class="a" style="left:68.5px;top:468px;width:195px;height:145.3px;background:#fff;border-radius:3px;box-shadow:0 0 0 1px #dad8da;"></div>
<svg class="a" style="left:68.5px;top:468px;opacity:.13" width="195" height="134" viewBox="438 292 925 636"><polygon fill="#c9c3c9" points="500.2,440.0 502.7,422.5 524.3,423.3 526.8,418.3 529.3,421.7 536.0,416.7 560.2,430.0 562.7,429.2 590.2,429.2 592.7,426.7 618.5,435.0 621.0,433.3 647.7,440.8 650.2,438.3 676.0,448.3 685,473 696,507 702.7,533 703,564 700,596 725,613 733.8,640 741.4,679 747.3,704 743.4,722 736.6,739 731.7,753 712,766 698,778 685,790 666,795.6 650,794 635.4,795.6 642,815 646,832 650,848 655,870 650,900 640,925 632,942 438,942 438,470 491,470"/><polygon fill="#c9c3c9" points="451.8,301.3 458.5,301.3 463.5,316.7 470.2,334.2 474.7,350.0 470.2,356.7 471.0,364.2 476.8,374.2 486.0,396.7 494.7,418.3 501.8,436.7 506.0,456.7 509.3,471.7 491.0,471.7 486.0,450.0 477.7,426.7 469.3,403.3 461.0,383.3 457.3,373.3 462.7,356.7 461.0,333.3 452.7,320.0"/><polygon fill="#c9c3c9" points="438.5,361.7 441.0,365.0 449.3,396.7 457.7,433.3 465.2,471.7 454.3,471.7 446.0,433.3 438.5,400.0"/><polygon fill="#c9c3c9" points="438.5,410.0 444.3,433.3 451.3,471.7 438.5,471.7"/><polygon fill="#c9c3c9" points="490.2,368.3 502.7,359.2 509.3,373.3 516.0,390.0 522.7,406.7 527.3,419.2 529.3,424.2 502.7,424.2 501.8,406.7 496.0,386.7"/><polygon fill="#c9c3c9" points="526.8,376.7 531.8,377.5 536.0,390.0 542.7,392.0 552.7,413.3 561.0,431.3 536.0,424.2 534.3,406.7 529.3,390.0"/><polygon fill="#c9c3c9" points="559.3,380.0 563.5,380.8 564.7,391.7 574.3,393.7 582.7,411.7 591.0,430.3 562.7,430.3 564.3,416.7 561.8,396.7"/><polygon fill="#c9c3c9" points="586.0,383.3 590.2,390.0 596.0,393.7 607.7,415.0 619.3,436.0 592.7,428.7 591.8,410.0 588.5,396.7"/><polygon fill="#c9c3c9" points="620.2,398.0 626.0,400.3 636.0,418.3 649.7,441.3 621.0,434.7 622.7,416.7"/><polygon fill="#c9c3c9" points="636.0,395.3 640.7,385.0 644.3,393.7 648.0,388.3 652.7,403.3 664.3,423.3 676.0,448.3 676.0,456.7 650.2,439.7 642.7,416.7"/><polygon fill="#c9c3c9" points="481.8,346.7 487.7,316.7 495.2,340.0 486.0,350.3"/><polygon fill="#c9c3c9" points="508.5,326.7 516.8,312.5 520.2,323.3 511.8,336.2"/><polygon fill="#c9c3c9" points="536.0,325.0 545.2,313.3 549.0,323.3 541.0,333.7"/><polygon fill="#c9c3c9" points="566.0,329.2 574.3,324.2 577.7,331.7 570.2,339.3"/><polygon fill="#c9c3c9" points="520.2,360.0 527.7,353.3 529.7,360.0 525.2,371.7"/><polygon fill="#c9c3c9" points="549.3,356.7 554.3,353.3 556.3,358.3 551.8,362.0"/><polygon fill="#c9c3c9" points="578.5,363.3 582.7,361.7 585.3,371.7 582.7,373.7"/><polygon fill="#fff" points="465,470 490,470 499,498 506,524 501,526 488,502"/><polygon fill="#fff" points="452,470 456,470 464,498 461,499"/><path d="M444.9 442.2 L454.9 477.8" stroke="#fff" stroke-width="10.8" stroke-linecap="round"/><path d="M470.4 440.0 L481.6 468.9" stroke="#fff" stroke-width="8.4" stroke-linecap="round"/><path d="M488.2 480.0 L501.6 531.1" stroke="#fff" stroke-width="6.6" stroke-linecap="round"/><path d="M453.8 504.4 L467.1 544.4" stroke="#fff" stroke-width="7.8" stroke-linecap="round"/><path d="M506.0 455.6 L528.2 524.4" stroke="#fff" stroke-width="4.8" stroke-linecap="round"/><path d="M532.0 454.4 L535.6 467.8" stroke="#fff" stroke-width="2.7" stroke-linecap="round"/><path d="M538.2 475.6 L554.9 524.4" stroke="#fff" stroke-width="4.8" stroke-linecap="round"/><path d="M563.1 474.4 L569.8 492.2" stroke="#fff" stroke-width="2.1" stroke-linecap="round"/><path d="M440.0 535.6 L442.2 557.8" stroke="#fff" stroke-width="5.4" stroke-linecap="round"/><path d="M530.4 542.2 L543.8 580.0" stroke="#fff" stroke-width="5.4" stroke-linecap="round"/><path d="M556.0 540.0 L568.2 575.6" stroke="#fff" stroke-width="6.0" stroke-linecap="round"/><path d="M579.3 540.0 L590.4 573.3" stroke="#fff" stroke-width="3.0" stroke-linecap="round"/><path d="M603.8 537.8 L612.7 575.6" stroke="#fff" stroke-width="4.5" stroke-linecap="round"/><path d="M508.2 566.7 L523.8 615.6" stroke="#fff" stroke-width="5.4" stroke-linecap="round"/><path d="M481.6 575.6 L499.3 622.2" stroke="#fff" stroke-width="6.0" stroke-linecap="round"/><path d="M461.6 586.7 L477.1 633.3" stroke="#fff" stroke-width="6.0" stroke-linecap="round"/><path d="M548.2 566.7 L577.1 657.8" stroke="#fff" stroke-width="4.2" stroke-linecap="round"/><path d="M579.3 566.7 L599.3 633.3" stroke="#fff" stroke-width="2.1" stroke-linecap="round"/><path d="M454.9 617.8 L477.1 678.9" stroke="#fff" stroke-width="4.8" stroke-linecap="round"/><path d="M442.7 626.7 L448.2 660.0" stroke="#fff" stroke-width="2.4" stroke-linecap="round"/><path d="M534.9 637.8 L550.4 678.9" stroke="#fff" stroke-width="5.4" stroke-linecap="round"/><path d="M488.2 631.1 L508.2 678.9" stroke="#fff" stroke-width="4.8" stroke-linecap="round"/><path d="M643.8 584.4 L657.1 626.7" stroke="#fff" stroke-width="3.0" stroke-linecap="round"/><path d="M672.7 595.6 L686.0 637.8" stroke="#fff" stroke-width="2.4" stroke-linecap="round"/><path d="M701.6 611.1 L711.1 660.0" stroke="#fff" stroke-width="2.4" stroke-linecap="round"/><path d="M719.3 620.0 L732.7 673.3" stroke="#fff" stroke-width="2.4" stroke-linecap="round"/><path d="M641.6 525.6 L646.7 536.7" stroke="#fff" stroke-width="3.6" stroke-linecap="round"/><path d="M596.9 514.4 L604.0 527.8" stroke="#fff" stroke-width="2.7" stroke-linecap="round"/><path d="M440.9 667.2 L453.5 706.1" stroke="#fff" stroke-width="5.3" stroke-linecap="butt"/><path d="M465.2 641.9 L481.7 691.6" stroke="#fff" stroke-width="6.8" stroke-linecap="butt"/><path d="M495.9 641.0 L509.5 679.9" stroke="#fff" stroke-width="5.8" stroke-linecap="butt"/><path d="M533.3 641.0 L544.9 669.2" stroke="#fff" stroke-width="7.4" stroke-linecap="butt"/><path d="M544.9 669.2 L561.5 719.8" stroke="#fff" stroke-width="5.3" stroke-linecap="butt"/><path d="M571.2 641.0 L576.5 658.5" stroke="#fff" stroke-width="3.2" stroke-linecap="round"/><path d="M525.9 712.0 L541.1 748.9" stroke="#fff" stroke-width="6.8" stroke-linecap="butt"/><path d="M541.1 748.9 L560.5 811.2" stroke="#fff" stroke-width="4.7" stroke-linecap="butt"/><path d="M552.3 721.7 L571.8 786.9" stroke="#fff" stroke-width="2.1" stroke-linecap="round"/><path d="M567.3 723.7 L594.6 814.1" stroke="#fff" stroke-width="5.8" stroke-linecap="butt"/><path d="M572.8 825.8 L579.6 845.3" stroke="#fff" stroke-width="1.8" stroke-linecap="round"/><path d="M685.6 641.0 L690.5 656.5" stroke="#fff" stroke-width="1.8" stroke-linecap="round"/><path d="M705.1 641.0 L711.9 664.3" stroke="#fff" stroke-width="1.8" stroke-linecap="round"/><path d="M722.4 648.8 L727.4 670.2" stroke="#fff" stroke-width="1.3" stroke-linecap="round"/><polygon fill="#fff" points="627,574 649,568 703,563 722,604 700,598 692,590 681,586 672,598 658,595 650,584 637,587"/><rect x="640" y="590" width="10" height="4" fill="#fff" transform="rotate(-18 640 590)"/><rect x="662" y="600" width="9" height="4" fill="#fff" transform="rotate(-18 662 600)"/><rect x="684" y="588" width="8" height="4" fill="#fff" transform="rotate(-18 684 588)"/><polygon fill="#fff" points="635,796 664,803 666,795 690,800 660,808 642,815 650,848 676,848 700,800 640,790"/><polygon fill="#fff" points="480,848 492,838 498,848"/><polygon fill="#fff" points="505,848 515,836 518,848"/></svg>
<div class="t" style="left:142.60px;top:474px;font-size:10.2px;line-height:11px;color:#97003d;font-weight:700;letter-spacing:-0.277px;">Initial data</div>
<div class="a" style="left:211.3px;top:492.6px;width:26.7px;height:6.2px;background:#2fe82f;"></div>
<div class="a" style="left:138px;top:516px;width:21.8px;height:6px;background:#2fe82f;"></div>
<div class="t" style="left:76.00px;top:491px;font-size:7.05px;line-height:7px;color:#111;font-weight:700;">Business Company bought a Device for 10,000 €. The</div>
<div class="t" style="left:76.00px;top:498px;font-size:7.03px;line-height:7px;color:#111;font-weight:700;">estimated usage life is 5 years. The expected residual</div>
<div class="t" style="left:76.00px;top:506px;font-size:6.9px;line-height:7px;color:#111;font-weight:700;">value (terminal value) is 0. One year after purchase the</div>
<div class="t" style="left:76.00px;top:524px;font-size:6.94px;line-height:7px;color:#111;font-weight:700;">The simple journal entry for recording the purchase of</div>
<div class="t" style="left:76.00px;top:560px;font-size:6.57px;line-height:7px;color:#111;font-weight:700;">The depreciation is computed by using of 1) straight-line,</div>
<div class="t" style="left:76.00px;top:514px;font-size:6.39px;line-height:7px;color:#111;font-weight:700;">Device was sold for 7,000 €.</div>
<div class="t" style="left:76.00px;top:531px;font-size:6.5px;line-height:7px;color:#111;font-weight:700;">equipment:</div>
<div class="t" style="left:76.00px;top:542px;font-size:6.6px;line-height:7px;color:#111;font-weight:700;">Dr: Device     10,000 €</div>
<div class="t" style="left:86.50px;top:549px;font-size:6.46px;line-height:7px;color:#111;font-weight:700;">Cr: Bank account   10,000 €</div>
<div class="t" style="left:76.00px;top:567px;font-size:6.44px;line-height:7px;color:#111;font-weight:700;">2) double declining (double diminishing) balance method.</div>
<div class="a" style="left:184px;top:592.5px;width:7px;height:7.5px;background:repeating-linear-gradient(90deg,#7a3a50 0 1.2px,#fff 1.2px 2px);"></div><div class="a" style="left:194px;top:594.7px;width:58px;height:1px;background:#b9a3ab;"></div><div class="a" style="left:194px;top:597.7px;width:60px;height:0.9px;background:#c9c3c6;"></div>
<div class="a" style="left:68.5px;top:602.3px;width:195px;height:11px;background:#8c8a8c;border-radius:0 0 3px 3px;"></div>
<div class="a" style="left:68.5px;top:634.7px;width:195px;height:144.3px;background:#fff;border-radius:3px;box-shadow:0 0 0 1px #dad8da;"></div>
<svg class="a" style="left:68.5px;top:634.7px;opacity:.13" width="195" height="134" viewBox="438 292 925 636"><polygon fill="#c9c3c9" points="500.2,440.0 502.7,422.5 524.3,423.3 526.8,418.3 529.3,421.7 536.0,416.7 560.2,430.0 562.7,429.2 590.2,429.2 592.7,426.7 618.5,435.0 621.0,433.3 647.7,440.8 650.2,438.3 676.0,448.3 685,473 696,507 702.7,533 703,564 700,596 725,613 733.8,640 741.4,679 747.3,704 743.4,722 736.6,739 731.7,753 712,766 698,778 685,790 666,795.6 650,794 635.4,795.6 642,815 646,832 650,848 655,870 650,900 640,925 632,942 438,942 438,470 491,470"/><polygon fill="#c9c3c9" points="451.8,301.3 458.5,301.3 463.5,316.7 470.2,334.2 474.7,350.0 470.2,356.7 471.0,364.2 476.8,374.2 486.0,396.7 494.7,418.3 501.8,436.7 506.0,456.7 509.3,471.7 491.0,471.7 486.0,450.0 477.7,426.7 469.3,403.3 461.0,383.3 457.3,373.3 462.7,356.7 461.0,333.3 452.7,320.0"/><polygon fill="#c9c3c9" points="438.5,361.7 441.0,365.0 449.3,396.7 457.7,433.3 465.2,471.7 454.3,471.7 446.0,433.3 438.5,400.0"/><polygon fill="#c9c3c9" points="438.5,410.0 444.3,433.3 451.3,471.7 438.5,471.7"/><polygon fill="#c9c3c9" points="490.2,368.3 502.7,359.2 509.3,373.3 516.0,390.0 522.7,406.7 527.3,419.2 529.3,424.2 502.7,424.2 501.8,406.7 496.0,386.7"/><polygon fill="#c9c3c9" points="526.8,376.7 531.8,377.5 536.0,390.0 542.7,392.0 552.7,413.3 561.0,431.3 536.0,424.2 534.3,406.7 529.3,390.0"/><polygon fill="#c9c3c9" points="559.3,380.0 563.5,380.8 564.7,391.7 574.3,393.7 582.7,411.7 591.0,430.3 562.7,430.3 564.3,416.7 561.8,396.7"/><polygon fill="#c9c3c9" points="586.0,383.3 590.2,390.0 596.0,393.7 607.7,415.0 619.3,436.0 592.7,428.7 591.8,410.0 588.5,396.7"/><polygon fill="#c9c3c9" points="620.2,398.0 626.0,400.3 636.0,418.3 649.7,441.3 621.0,434.7 622.7,416.7"/><polygon fill="#c9c3c9" points="636.0,395.3 640.7,385.0 644.3,393.7 648.0,388.3 652.7,403.3 664.3,423.3 676.0,448.3 676.0,456.7 650.2,439.7 642.7,416.7"/><polygon fill="#c9c3c9" points="481.8,346.7 487.7,316.7 495.2,340.0 486.0,350.3"/><polygon fill="#c9c3c9" points="508.5,326.7 516.8,312.5 520.2,323.3 511.8,336.2"/><polygon fill="#c9c3c9" points="536.0,325.0 545.2,313.3 549.0,323.3 541.0,333.7"/><polygon fill="#c9c3c9" points="566.0,329.2 574.3,324.2 577.7,331.7 570.2,339.3"/><polygon fill="#c9c3c9" points="520.2,360.0 527.7,353.3 529.7,360.0 525.2,371.7"/><polygon fill="#c9c3c9" points="549.3,356.7 554.3,353.3 556.3,358.3 551.8,362.0"/><polygon fill="#c9c3c9" points="578.5,363.3 582.7,361.7 585.3,371.7 582.7,373.7"/><polygon fill="#fff" points="465,470 490,470 499,498 506,524 501,526 488,502"/><polygon fill="#fff" points="452,470 456,470 464,498 461,499"/><path d="M444.9 442.2 L454.9 477.8" stroke="#fff" stroke-width="10.8" stroke-linecap="round"/><path d="M470.4 440.0 L481.6 468.9" stroke="#fff" stroke-width="8.4" stroke-linecap="round"/><path d="M488.2 480.0 L501.6 531.1" stroke="#fff" stroke-width="6.6" stroke-linecap="round"/><path d="M453.8 504.4 L467.1 544.4" stroke="#fff" stroke-width="7.8" stroke-linecap="round"/><path d="M506.0 455.6 L528.2 524.4" stroke="#fff" stroke-width="4.8" stroke-linecap="round"/><path d="M532.0 454.4 L535.6 467.8" stroke="#fff" stroke-width="2.7" stroke-linecap="round"/><path d="M538.2 475.6 L554.9 524.4" stroke="#fff" stroke-width="4.8" stroke-linecap="round"/><path d="M563.1 474.4 L569.8 492.2" stroke="#fff" stroke-width="2.1" stroke-linecap="round"/><path d="M440.0 535.6 L442.2 557.8" stroke="#fff" stroke-width="5.4" stroke-linecap="round"/><path d="M530.4 542.2 L543.8 580.0" stroke="#fff" stroke-width="5.4" stroke-linecap="round"/><path d="M556.0 540.0 L568.2 575.6" stroke="#fff" stroke-width="6.0" stroke-linecap="round"/><path d="M579.3 540.0 L590.4 573.3" stroke="#fff" stroke-width="3.0" stroke-linecap="round"/><path d="M603.8 537.8 L612.7 575.6" stroke="#fff" stroke-width="4.5" stroke-linecap="round"/><path d="M508.2 566.7 L523.8 615.6" stroke="#fff" stroke-width="5.4" stroke-linecap="round"/><path d="M481.6 575.6 L499.3 622.2" stroke="#fff" stroke-width="6.0" stroke-linecap="round"/><path d="M461.6 586.7 L477.1 633.3" stroke="#fff" stroke-width="6.0" stroke-linecap="round"/><path d="M548.2 566.7 L577.1 657.8" stroke="#fff" stroke-width="4.2" stroke-linecap="round"/><path d="M579.3 566.7 L599.3 633.3" stroke="#fff" stroke-width="2.1" stroke-linecap="round"/><path d="M454.9 617.8 L477.1 678.9" stroke="#fff" stroke-width="4.8" stroke-linecap="round"/><path d="M442.7 626.7 L448.2 660.0" stroke="#fff" stroke-width="2.4" stroke-linecap="round"/><path d="M534.9 637.8 L550.4 678.9" stroke="#fff" stroke-width="5.4" stroke-linecap="round"/><path d="M488.2 631.1 L508.2 678.9" stroke="#fff" stroke-width="4.8" stroke-linecap="round"/><path d="M643.8 584.4 L657.1 626.7" stroke="#fff" stroke-width="3.0" stroke-linecap="round"/><path d="M672.7 595.6 L686.0 637.8" stroke="#fff" stroke-width="2.4" stroke-linecap="round"/><path d="M701.6 611.1 L711.1 660.0" stroke="#fff" stroke-width="2.4" stroke-linecap="round"/><path d="M719.3 620.0 L732.7 673.3" stroke="#fff" stroke-width="2.4" stroke-linecap="round"/><path d="M641.6 525.6 L646.7 536.7" stroke="#fff" stroke-width="3.6" stroke-linecap="round"/><path d="M596.9 514.4 L604.0 527.8" stroke="#fff" stroke-width="2.7" stroke-linecap="round"/><path d="M440.9 667.2 L453.5 706.1" stroke="#fff" stroke-width="5.3" stroke-linecap="butt"/><path d="M465.2 641.9 L481.7 691.6" stroke="#fff" stroke-width="6.8" stroke-linecap="butt"/><path d="M495.9 641.0 L509.5 679.9" stroke="#fff" stroke-width="5.8" stroke-linecap="butt"/><path d="M533.3 641.0 L544.9 669.2" stroke="#fff" stroke-width="7.4" stroke-linecap="butt"/><path d="M544.9 669.2 L561.5 719.8" stroke="#fff" stroke-width="5.3" stroke-linecap="butt"/><path d="M571.2 641.0 L576.5 658.5" stroke="#fff" stroke-width="3.2" stroke-linecap="round"/><path d="M525.9 712.0 L541.1 748.9" stroke="#fff" stroke-width="6.8" stroke-linecap="butt"/><path d="M541.1 748.9 L560.5 811.2" stroke="#fff" stroke-width="4.7" stroke-linecap="butt"/><path d="M552.3 721.7 L571.8 786.9" stroke="#fff" stroke-width="2.1" stroke-linecap="round"/><path d="M567.3 723.7 L594.6 814.1" stroke="#fff" stroke-width="5.8" stroke-linecap="butt"/><path d="M572.8 825.8 L579.6 845.3" stroke="#fff" stroke-width="1.8" stroke-linecap="round"/><path d="M685.6 641.0 L690.5 656.5" stroke="#fff" stroke-width="1.8" stroke-linecap="round"/><path d="M705.1 641.0 L711.9 664.3" stroke="#fff" stroke-width="1.8" stroke-linecap="round"/><path d="M722.4 648.8 L727.4 670.2" stroke="#fff" stroke-width="1.3" stroke-linecap="round"/><polygon fill="#fff" points="627,574 649,568 703,563 722,604 700,598 692,590 681,586 672,598 658,595 650,584 637,587"/><rect x="640" y="590" width="10" height="4" fill="#fff" transform="rotate(-18 640 590)"/><rect x="662" y="600" width="9" height="4" fill="#fff" transform="rotate(-18 662 600)"/><rect x="684" y="588" width="8" height="4" fill="#fff" transform="rotate(-18 684 588)"/><polygon fill="#fff" points="635,796 664,803 666,795 690,800 660,808 642,815 650,848 676,848 700,800 640,790"/><polygon fill="#fff" points="480,848 492,838 498,848"/><polygon fill="#fff" points="505,848 515,836 518,848"/></svg>
<div class="t" style="left:91.30px;top:639px;font-size:8.2px;line-height:9px;color:#97003d;font-weight:700;letter-spacing:0.180px;">Journal entries: Straight-line method</div>
<div class="t" style="left:102.00px;top:650px;font-size:8.2px;line-height:9px;color:#97003d;font-weight:700;letter-spacing:0.204px;">(depreciation rate for year 20%)</div>
<div class="t" style="left:81.30px;top:664px;font-size:7.55px;line-height:9px;color:#111;font-weight:700;">Dr: Depreciation expense</div>
<div class="t" style="left:199.30px;top:665px;font-size:7.46px;line-height:7px;color:#111;font-weight:700;">2,000 €</div>
<div class="t" style="left:91.60px;top:673px;font-size:7.57px;line-height:9px;color:#111;font-weight:700;">Cr: Accumulated depreciation</div>
<div class="t" style="left:216.00px;top:674px;font-size:7.49px;line-height:7px;color:#111;font-weight:700;">2,000 €</div>
<div class="t" style="left:81.30px;top:686px;font-size:7.54px;line-height:9px;color:#111;font-weight:700;text-decoration:underline;">At the end of the first year:</div>
<div class="a" style="left:94.6px;top:702.8px;width:146.5px;height:32px;background:#dfd3c1;"></div>
<div class="a" style="left:207px;top:723.5px;width:35px;height:11.3px;background:#f6f1ea;"></div>
<div class="t" style="left:95.70px;top:702px;font-size:7.6px;line-height:9px;color:#6436a8;font-family:'Liberation Sans',sans-serif;font-style:italic;letter-spacing:0.114px;">Device</div>
<div class="t" style="left:208.50px;top:702px;font-size:7.6px;line-height:9px;color:#6436a8;letter-spacing:-0.155px;">10,000 €</div>
<div class="t" style="left:95.70px;top:712px;font-size:7.6px;line-height:9px;color:#6436a8;letter-spacing:0.276px;text-decoration:underline;">Accumulated depreciation</div>
<div class="t" style="left:208.00px;top:712px;font-size:7.6px;line-height:9px;color:#6436a8;letter-spacing:-0.052px;text-decoration:underline;">(2,000 €)</div>
<div class="t" style="left:95.70px;top:722px;font-size:7.6px;line-height:9px;color:#6436a8;letter-spacing:0.223px;">Book value (depreciated cost)</div>
<div class="t" style="left:212.50px;top:722px;font-size:7.6px;line-height:9px;color:#6436a8;letter-spacing:-0.226px;">8,000 €</div>
<div class="a" style="left:184px;top:759.5px;width:7px;height:7.5px;background:repeating-linear-gradient(90deg,#7a3a50 0 1.2px,#fff 1.2px 2px);"></div><div class="a" style="left:194px;top:761.7px;width:58px;height:1px;background:#b9a3ab;"></div><div class="a" style="left:194px;top:764.7px;width:60px;height:0.9px;background:#c9c3c6;"></div>
<div class="a" style="left:68.5px;top:770.2px;width:195px;height:11px;background:#8c8a8c;border-radius:0 0 3px 3px;"></div>
<div class="a" style="left:60px;top:796px;width:215px;height:88px;overflow:hidden"><div class="a" style="left:-60px;top:-796px">
<div class="a" style="left:68.5px;top:800.6px;width:195px;height:146px;background:#fff;border-radius:3px;box-shadow:0 0 0 1px #dad8da;"></div>
<div class="t" style="left:91.30px;top:807px;font-size:8.2px;line-height:9px;color:#97003d;font-weight:700;letter-spacing:0.180px;">Journal entries: Straight-line method</div>
<div class="a" style="left:71.5px;top:822px;width:88px;height:62px;background:#dfd3c1;"></div>
<div class="a" style="left:159.5px;top:822px;width:101px;height:7px;background:#dfd3c1;"></div>
<div class="a" style="left:181px;top:829px;width:80px;height:55px;background:#f6f2ea;"></div>
<div class="t" style="left:96.00px;top:822px;font-size:6.57px;line-height:7px;color:#222;">Journal entry</div>
<div class="t" style="left:163.50px;top:822px;font-size:6.16px;line-height:7px;color:#222;">EUR</div>
<div class="t" style="left:203.50px;top:822px;font-size:6.51px;line-height:7px;color:#222;">Explanation</div>
<div class="t" style="left:72.50px;top:829px;font-size:5.92px;line-height:6px;color:#111;font-weight:700;">Dr: Accounts Receivable</div>
<div class="t" style="left:161.30px;top:829px;font-size:5.87px;line-height:6px;color:#111;font-weight:700;">7,000</div>
<div class="t" style="left:182.70px;top:829px;font-size:5.93px;line-height:6px;color:#111;font-weight:700;">The buyer is invoiced.</div>
<div class="t" style="left:72.50px;top:847px;font-size:5.96px;line-height:6px;color:#111;font-weight:700;">Dr: Accumulated depreciation</div>
<div class="t" style="left:161.30px;top:847px;font-size:5.87px;line-height:6px;color:#111;font-weight:700;">2,000</div>
<div class="t" style="left:182.70px;top:847px;font-size:5.97px;line-height:6px;color:#111;font-weight:700;">Accumulated  depreciation</div>
<div class="t" style="left:182.70px;top:855px;font-size:5.97px;line-height:6px;color:#111;font-weight:700;">is eliminated.</div>
<div class="a" style="left:72.3px;top:868.8px;width:52.5px;height:6.2px;background:#2fe82f;"></div>
<div class="a" style="left:161px;top:868.8px;width:15.3px;height:6.2px;background:#2fe82f;"></div>
<div class="a" style="left:182.3px;top:868.6px;width:77.5px;height:14.3px;background:#2fe82f;"></div>
<div class="a" style="left:72.3px;top:883px;width:58px;height:1px;background:#2fe82f;"></div>
<div class="t" style="left:72.50px;top:869px;font-size:5.96px;line-height:6px;color:#111;font-weight:700;">Dr: Debit Balancer</div>
<div class="t" style="left:112.00px;top:875px;font-size:6.0px;line-height:6px;color:#111;font-weight:700;">or</div>
<div class="t" style="left:161.30px;top:869px;font-size:5.87px;line-height:6px;color:#111;font-weight:700;">1,000</div>
<div class="t" style="left:182.70px;top:868px;font-size:6.13px;line-height:7px;color:#111;font-weight:700;">It is necessary to increase</div>
<div class="t" style="left:182.70px;top:876px;font-size:5.99px;line-height:6px;color:#111;font-weight:700;">the Debit side by 1,000 €.</div>
</div></div>
<div class="a" style="left:34px;top:884px;width:1479px;height:21px;background:#f6f5f6;"></div>
<div class="t" style="left:45.40px;top:889px;font-size:10.6px;line-height:12px;color:#3b3b3b;letter-spacing:-0.185px;">Slide 1 of 9</div>
<div class="t" style="left:128.70px;top:889px;font-size:10.6px;line-height:12px;color:#3b3b3b;letter-spacing:-0.414px;">English (United States)</div>
<svg class="a" style="left:244.5px;top:888px;" width="13" height="14" viewBox="0 0 13 14"><circle cx="6" cy="2.4" r="1.5" fill="none" stroke="#333" stroke-width="1"/><path d="M1 5.2 C4 6.4 8 6.4 11 5.2 M6 6 V9 M6 9 L3.3 13 M6 9 L7.4 11" fill="none" stroke="#333" stroke-width="1.05" stroke-linecap="round"/><circle cx="9.6" cy="10.8" r="2.2" fill="#f3f1f3" stroke="#333" stroke-width=".9"/><path d="M9.6 9.8 V11.1 M9.6 11.9 V12" stroke="#333" stroke-width=".8"/></svg>
<div class="t" style="left:261.00px;top:889px;font-size:10.6px;line-height:12px;color:#3b3b3b;letter-spacing:-0.360px;">Accessibility: Unavailable</div>
<svg class="a" style="left:998px;top:887px;" width="17" height="16" viewBox="0 0 17 16"><path d="M1 8.3 H16 M1 11.3 H16 M1 14.3 H16" stroke="#444" stroke-width="1.1"/><path d="M6.3 4.5 L8.5 2 L10.7 4.5" fill="none" stroke="#444" stroke-width="1.1"/></svg>
<div class="t" style="left:1016.30px;top:889px;font-size:10.6px;line-height:12px;color:#3b3b3b;letter-spacing:-0.323px;">Notes</div>
<svg class="a" style="left:1058.5px;top:888px;" width="16" height="14" viewBox="0 0 16 14"><path d="M8 9.4 H1 V1 H14 V6" fill="none" stroke="#444" stroke-width="1.1"/><circle cx="10.8" cy="9.8" r="2.6" fill="none" stroke="#333" stroke-width="1.5" stroke-dasharray="1.3 .9"/><circle cx="10.8" cy="9.8" r=".8" fill="#333"/><path d="M3 12.4 H7" stroke="#444" stroke-width="1.1"/></svg>
<div class="t" style="left:1075.20px;top:889px;font-size:10.6px;line-height:12px;color:#3b3b3b;letter-spacing:-0.347px;">Display Settings</div>
<div class="a" style="left:1164.8px;top:884.5px;width:38.3px;height:20.5px;background:#dddbdd;"></div>
<svg class="a" style="left:1177px;top:888.5px;" width="15" height="13" viewBox="0 0 15 13"><rect x=".8" y=".8" width="13" height="10.6" fill="none" stroke="#333" stroke-width="1.2"/><path d="M4.2 1 V11.4" stroke="#333" stroke-width="1.1"/><rect x="6.3" y="3" width="5.4" height="3.6" fill="none" stroke="#333" stroke-width="1"/><path d="M6 8.9 H12" stroke="#333" stroke-width="1"/></svg>
<svg class="a" style="left:1215px;top:889px;" width="15" height="13" viewBox="0 0 15 13"><rect x="0.8" y="0.8" width="5.2" height="4.2" fill="none" stroke="#444" stroke-width="1.1"/><rect x="0.8" y="7.4" width="5.2" height="4.2" fill="none" stroke="#444" stroke-width="1.1"/><rect x="8.4" y="0.8" width="5.2" height="4.2" fill="none" stroke="#444" stroke-width="1.1"/><rect x="8.4" y="7.4" width="5.2" height="4.2" fill="none" stroke="#444" stroke-width="1.1"/></svg>
<svg class="a" style="left:1253.5px;top:888.5px;" width="14" height="13" viewBox="0 0 14 13"><path d="M6.6 2 C4.6 .6 2.6 .6 .8 1.4 V11.4 C2.6 10.6 4.6 10.6 6.6 12 C8.6 10.6 10.6 10.6 12.4 11.4 V1.4 C10.6 .6 8.6 .6 6.6 2 Z M6.6 2 V12" fill="none" stroke="#444" stroke-width="1.05"/><path d="M2.6 4 H4.8 M2.6 6.2 H4.8 M2.6 8.4 H4.8 M8.4 4 H10.6 M8.4 6.2 H10.6 M8.4 8.4 H10.6" stroke="#444" stroke-width=".8"/></svg>
<svg class="a" style="left:1292.5px;top:888px;" width="14" height="14" viewBox="0 0 14 14"><path d="M.5 1 H13.5 M1.8 1 V8.3 H12.2 V1 M7 8.3 V12.5 M4 12.8 H10" fill="none" stroke="#444" stroke-width="1.1"/><rect x="5" y="3" width="4" height="3" fill="none" stroke="#444" stroke-width=".9"/></svg>
<div class="a" style="left:1324px;top:894.6px;width:7.5px;height:1px;background:#444;"></div>
<div class="a" style="left:1336.5px;top:894.8px;width:96.5px;height:1px;background:#6a686a;"></div>
<div class="a" style="left:1383.5px;top:889.3px;width:3.4px;height:11.4px;background:#5d5b5d;"></div>
<svg class="a" style="left:1437px;top:891px;" width="8" height="8" viewBox="0 0 8 8"><path d="M0 4 H8 M4 0 V8" stroke="#444" stroke-width="1"/></svg>
<div class="t" style="left:1458.00px;top:890px;font-size:9.7px;line-height:11px;color:#3b3b3b;letter-spacing:-0.603px;">100%</div>
<svg class="a" style="left:1493.5px;top:888px;" width="15" height="15" viewBox="0 0 15 15"><rect x="4" y="4" width="7" height="7" fill="none" stroke="#333" stroke-width="1.1"/><path d="M7.5 .8 V3 M7.5 12 V14.2 M.8 7.5 H3 M12 7.5 H14.2 M6 2.2 L7.5 .7 L9 2.2 M6 12.8 L7.5 14.3 L9 12.8 M2.2 6 L.7 7.5 L2.2 9 M12.8 6 L14.3 7.5 L12.8 9" fill="none" stroke="#333" stroke-width="1"/></svg>
<!-- p_video -->
<div class="a" style="left:1519.3px;top:530px;width:1.4px;height:38px;background:#bdbdbd;"></div>
<div class="a" style="left:1523.6px;top:530px;width:1.4px;height:38px;background:#bdbdbd;"></div>
<svg class="a" style="left:1531px;top:404px" width="370" height="209" viewBox="0 0 1912 1080" preserveAspectRatio="none"><defs><filter id="vb" x="-10%" y="-10%" width="120%" height="120%"><feGaussianBlur stdDeviation="7"/></filter><filter id="vb2" x="-10%" y="-10%" width="120%" height="120%"><feGaussianBlur stdDeviation="16"/></filter><filter id="vb0" x="-10%" y="-10%" width="120%" height="120%"><feGaussianBlur stdDeviation="3"/></filter><linearGradient id="ceil" x1="0" y1="0" x2="1" y2=".55"><stop offset="0" stop-color="#50555c"/><stop offset=".35" stop-color="#5f646e"/><stop offset=".7" stop-color="#7d808e"/><stop offset="1" stop-color="#8f91a0"/></linearGradient><linearGradient id="ceil2" x1="0" y1="0" x2="0" y2="1"><stop offset="0" stop-color="#a6a9b8" stop-opacity="0"/><stop offset="1" stop-color="#a6a9b8" stop-opacity=".95"/></linearGradient><linearGradient id="win" x1="0" y1="0" x2="1" y2="0"><stop offset="0" stop-color="#eef6fc"/><stop offset=".3" stop-color="#ffffff"/><stop offset=".62" stop-color="#f3f1ee"/><stop offset="1" stop-color="#ddd6cc"/></linearGradient><pattern id="wp" width="44" height="40" patternUnits="userSpaceOnUse"><rect width="44" height="40" fill="#93a7b8"/><ellipse cx="10" cy="9" rx="8" ry="6.5" fill="#34495a"/><ellipse cx="31" cy="27" rx="8.5" ry="6.5" fill="#3f5466"/><ellipse cx="30" cy="7" rx="5" ry="4" fill="#5a7284"/><ellipse cx="9" cy="30" rx="5" ry="4" fill="#526a7c"/></pattern><pattern id="flo" width="150" height="230" patternUnits="userSpaceOnUse"><g fill="none" stroke="#b98878" stroke-width="4" opacity=".8"><path d="M40 30 C55 45 50 70 35 85 M42 50 C60 48 70 60 66 76"/><circle cx="38" cy="96" r="12" fill="#d9a890" stroke="none"/><path d="M110 140 C125 155 120 180 105 195"/><circle cx="108" cy="204" r="12" fill="#cf9c8c" stroke="none"/><circle cx="120" cy="150" r="8" fill="#c79a96" stroke="none"/></g></pattern></defs><rect width="1912" height="1080" fill="url(#ceil)"/><polygon points="640,60 1912,0 1912,440 740,440" fill="url(#ceil2)" filter="url(#vb2)"/><polygon points="1040,372 1500,330 1580,330 1580,1080 1040,1080" fill="url(#wp)" filter="url(#vb0)"/><polygon points="740,400 1060,372 1060,460 760,470" fill="#8d9fb0" filter="url(#vb)"/><polygon points="0,0 520,0 700,380 700,1080 0,1080" fill="url(#win)"/><polygon points="180,0 520,0 700,380 700,1080 120,1080" fill="url(#flo)" filter="url(#vb)" opacity=".8"/><g filter="url(#vb)" fill="none"><path d="M140 40 L60 1080" stroke="#d5e2ee" stroke-width="26"/><path d="M250 60 L170 1080" stroke="#d9dde2" stroke-width="22"/><path d="M400 30 L290 1080" stroke="#dcdad6" stroke-width="26"/><path d="M480 120 L520 1080" stroke="#e4dfd8" stroke-width="20"/><path d="M0 120 L120 40 L210 90 L150 160" stroke="#c9d6e2" stroke-width="16"/><path d="M600 330 L640 1080" stroke="#d2cbc0" stroke-width="22"/></g><g filter="url(#vb0)"><polygon points="500,0 590,0 760,400 730,470 690,380" fill="#6d6560"/><polygon points="560,0 600,0 770,390 752,420" fill="#4a4648"/><polygon points="676,360 720,420 722,480 684,470" fill="#33343c"/></g><g filter="url(#vb0)"><polygon points="1470,400 1590,240 1900,258 1912,300 1912,420 1620,440 1560,520 1500,520" fill="#5c1f34"/><polygon points="1470,400 1590,240 1640,244 1540,410" fill="#6a2a40"/><polygon points="1480,430 1620,440 1560,520 1500,520" fill="#421826"/><rect x="1690" y="190" width="50" height="60" rx="14" fill="#c2a24a"/><polygon points="1548,566 1640,440 1912,420 1912,800 1604,792" fill="#b87a2d"/><polygon points="1548,566 1640,440 1660,442 1610,792 1604,792" fill="#94602a"/><polygon points="1700,440 1912,424 1912,640 1720,650" fill="#c48838" opacity=".8"/><polygon points="1460,790 1912,800 1912,940 1460,960" fill="#2a302f"/><ellipse cx="1570" cy="888" rx="72" ry="40" fill="#2f5868"/><rect x="1680" y="808" width="62" height="104" rx="16" fill="#3f8c72"/><path d="M1500 800 C1560 740 1620 770 1700 800" stroke="#26382e" stroke-width="16" fill="none"/><polygon points="1500,1000 1572,930 1870,920 1912,990 1912,1080 1490,1080" fill="#bb8c4c"/><polygon points="1500,1000 1572,930 1590,934 1540,1080 1490,1080" fill="#8a6434"/><polygon points="1860,925 1912,930 1912,1080 1890,1080" fill="#6a6c78"/><rect x="1276" y="648" width="96" height="54" fill="#363c46"/><rect x="1236" y="716" width="156" height="118" fill="#d6d6da"/><path d="M1236 740 H1392 M1236 764 H1392 M1236 788 H1392 M1236 812 H1392" stroke="#a8a8b0" stroke-width="5"/><rect x="1226" y="836" width="180" height="70" fill="#4a2a26"/><rect x="1200" y="906" width="300" height="174" fill="#3a2c30"/></g><g filter="url(#vb0)"><path d="M600 1080 C640 980 700 940 760 930 L1240 930 C1360 950 1440 1000 1490 1080 Z" fill="#29303f"/><path d="M640 1080 L720 960 M690 1080 L760 980 M1300 970 L1400 1060" stroke="#5a6478" stroke-width="10"/></g><g filter="url(#vb)"><path d="M640 700 C600 520 720 370 930 360 C1120 352 1250 470 1262 640 C1270 760 1250 900 1190 1000 L1180 1080 H760 L740 960 C690 900 654 800 640 700 Z" fill="#ab7c6c"/><path d="M640 700 C604 520 720 372 930 360 C1050 356 1150 400 1210 480 C1120 410 960 390 860 440 C790 480 760 560 756 660 L700 650 Z" fill="#6d6462"/><path d="M1130 430 C1220 480 1262 560 1262 660 L1236 720 C1240 600 1200 500 1130 430 Z" fill="#5e5656"/><ellipse cx="900" cy="520" rx="150" ry="90" fill="#cfa696"/><ellipse cx="840" cy="470" rx="60" ry="40" fill="#e0bcae"/><ellipse cx="1140" cy="860" rx="90" ry="170" fill="#8d5e54" opacity=".7"/><ellipse cx="690" cy="760" rx="36" ry="80" fill="#b98a7a"/><ellipse cx="1010" cy="830" rx="60" ry="36" fill="#b98878"/><ellipse cx="1030" cy="975" rx="80" ry="16" fill="#55302e"/><path d="M760 930 C860 1000 900 1040 900 1080 H760 Z" fill="#8f6256" opacity=".6"/></g><g filter="url(#vb0)"><rect x="834" y="646" width="206" height="122" rx="22" fill="#3d3d8c" stroke="#16161f" stroke-width="20"/><rect x="1092" y="676" width="172" height="112" rx="22" fill="#40408a" stroke="#16161f" stroke-width="20"/><path d="M1040 700 L1092 712" stroke="#16161f" stroke-width="18"/><path d="M834 660 L716 644" stroke="#1d1d2a" stroke-width="22"/><ellipse cx="930" cy="690" rx="70" ry="30" fill="#7d84cc" opacity=".85"/><ellipse cx="1170" cy="730" rx="52" ry="26" fill="#7d84cc" opacity=".7"/><ellipse cx="960" cy="740" rx="40" ry="14" fill="#2a2a60" opacity=".8"/></g></svg>
<div class="a" style="left:1532px;top:584.6px;width:119.3px;height:28.4px;background:rgba(66,66,66,.76);border-radius:7px;"></div>
<svg class="a" style="left:1534px;top:589px;" width="25" height="20" viewBox="0 0 25 20"><rect x=".9" y="13.4" width="4" height="5.5" fill="#fff"/><rect x="7.1" y="8.3" width="4" height="10.6" fill="#fff"/><rect x="13.3" y="4.3" width="4" height="14.6" fill="#fff"/><rect x="19.2" y="1" width="4" height="17.9" fill="#fff"/></svg>
<div class="t" style="left:1564.80px;top:590px;font-size:18.5px;line-height:19px;color:#fff;letter-spacing:-0.035px;">jaan.alver</div>
<!-- p_ztool -->
<svg class="a" style="left:84px;top:946px;" width="38" height="42" viewBox="0 0 38 42"><rect x="13.6" y="3.2" width="11" height="26.3" rx="5.5" fill="none" stroke="#fff" stroke-width="1.9"/><path d="M8.8 20 C8.8 33.5 29.6 33.5 29.6 20 M19.2 30.4 V38.2 M12.8 38.4 H25.8" fill="none" stroke="#fff" stroke-width="1.9" stroke-linecap="round"/><path d="M2.3 37.6 L35.5 4.7" stroke="#000" stroke-width="6"/><path d="M2.3 37.6 L35.5 4.7" stroke="#f2184f" stroke-width="3.2" stroke-linecap="round"/></svg>
<div class="t" style="left:84.50px;top:994px;font-size:17.6px;line-height:18px;color:#dcdcdc;letter-spacing:0.569px;-webkit-text-stroke:.5px #dcdcdc;">Звук</div>
<svg class="a" style="left:144.8px;top:962.8px;" width="12" height="8" viewBox="0 0 12 8"><path d="M1.2 6.6 L6 1.6 L10.8 6.6" fill="none" stroke="#b8b8b8" stroke-width="1.9" stroke-linecap="round" stroke-linejoin="round"/></svg>
<svg class="a" style="left:222px;top:946px;" width="42" height="42" viewBox="0 0 42 42"><rect x="2.6" y="11.4" width="25.4" height="19.6" rx="4.5" fill="none" stroke="#fff" stroke-width="1.9"/><path d="M28 19 L37.4 13.2 V29.4 L28 23.6" fill="none" stroke="#fff" stroke-width="1.9" stroke-linejoin="round"/><path d="M3.2 37.6 L36.6 4.3" stroke="#000" stroke-width="6"/><path d="M3.2 37.6 L36.6 4.3" stroke="#f2184f" stroke-width="3.2" stroke-linecap="round"/></svg>
<div class="t" style="left:217.00px;top:994px;font-size:17.6px;line-height:18px;color:#dcdcdc;letter-spacing:-0.030px;-webkit-text-stroke:.5px #dcdcdc;">Видео</div>
<svg class="a" style="left:291.5px;top:962.8px;" width="12" height="8" viewBox="0 0 12 8"><path d="M1.2 6.6 L6 1.6 L10.8 6.6" fill="none" stroke="#b8b8b8" stroke-width="1.9" stroke-linecap="round" stroke-linejoin="round"/></svg>
<svg class="a" style="left:574px;top:953px;" width="30" height="29" viewBox="0 0 30 29"><circle cx="10.4" cy="6.4" r="4.6" fill="none" stroke="#fff" stroke-width="1.9"/><path d="M2 25.8 V22 C2 17.6 5 15.4 9 15.4 H11 M2 25.8 H11" fill="none" stroke="#fff" stroke-width="1.9" stroke-linecap="round"/><circle cx="21" cy="12.6" r="3.9" fill="none" stroke="#fff" stroke-width="1.9"/><rect x="13.4" y="19.4" width="14.8" height="7.4" rx="3.7" fill="none" stroke="#fff" stroke-width="1.9"/></svg>
<div class="t" style="left:614.60px;top:957px;font-size:17.5px;line-height:18px;color:#d4d4d4;letter-spacing:-0.766px;">89</div>
<svg class="a" style="left:663px;top:962.8px;" width="12" height="8" viewBox="0 0 12 8"><path d="M1.2 6.6 L6 1.6 L10.8 6.6" fill="none" stroke="#b8b8b8" stroke-width="1.9" stroke-linecap="round" stroke-linejoin="round"/></svg>
<div class="t" style="left:545.70px;top:994px;font-size:17.6px;line-height:18px;color:#dcdcdc;letter-spacing:0.290px;-webkit-text-stroke:.5px #dcdcdc;">Участники</div>
<svg class="a" style="left:735px;top:949px;" width="32" height="36" viewBox="0 0 32 36"><path d="M10 8 C10 4.6 12 3 15 3 H24 C27 3 29 4.8 29 8 V14 C29 17 27.4 18.6 25 18.8" fill="none" stroke="#fff" stroke-width="1.8"/><path d="M3 15 C3 11.6 5 10 8 10 H21 C24 10 26 11.8 26 15 V23 C26 26.2 24 28 21 28 H13.5 L8.5 32.6 V28 C5 28 3 26.2 3 23 Z" fill="#000" stroke="#fff" stroke-width="1.9" stroke-linejoin="round"/><circle cx="9.5" cy="19" r="1.5" fill="#fff"/><circle cx="14.5" cy="19" r="1.5" fill="#fff"/><circle cx="19.5" cy="19" r="1.5" fill="#fff"/></svg>
<div class="a" style="left:759.5px;top:945.2px;width:23px;height:23px;background:#f2343f;border-radius:50%;"></div>
<div class="t" style="left:766.79px;top:949px;font-size:15.5px;line-height:17px;color:#fff;font-weight:700;">3</div>
<svg class="a" style="left:798.2px;top:962.8px;" width="12" height="8" viewBox="0 0 12 8"><path d="M1.2 6.6 L6 1.6 L10.8 6.6" fill="none" stroke="#b8b8b8" stroke-width="1.9" stroke-linecap="round" stroke-linejoin="round"/></svg>
<div class="t" style="left:741.50px;top:994px;font-size:17.6px;line-height:18px;color:#dcdcdc;letter-spacing:-0.997px;-webkit-text-stroke:.5px #dcdcdc;">Чат</div>
<svg class="a" style="left:879px;top:950px;" width="39" height="35" viewBox="0 0 39 35"><path d="M19.5 31.5 C15 28 3 20.5 2.6 11.5 C2.3 5 9 1.5 13.6 4.6 C16 6.2 17.4 8.6 18 10 C18.6 8.6 20.4 5.4 24 4 C29.6 1.8 36 5.6 35.6 12 C35 20 26 25.6 19.5 31.5 Z" fill="none" stroke="#fff" stroke-width="2" stroke-linejoin="round" transform="rotate(-8 19 18)"/></svg>
<div class="t" style="left:835.10px;top:994px;font-size:17.6px;line-height:18px;color:#dcdcdc;letter-spacing:0.347px;-webkit-text-stroke:.5px #dcdcdc;">Отреагировать</div>
<div class="a" style="left:1030px;top:952.2px;width:36.3px;height:29px;background:#11e386;border-radius:5.5px;"></div>
<svg class="a" style="left:1039px;top:957.5px;" width="18" height="19" viewBox="0 0 18 19"><path d="M9 17 V4 M3.2 9.4 L9 3.4 L14.8 9.4" fill="none" stroke="#0a0a0a" stroke-width="3.1" stroke-linecap="round" stroke-linejoin="round"/></svg>
<div class="t" style="left:998.90px;top:994px;font-size:17.6px;line-height:18px;color:#dcdcdc;letter-spacing:0.212px;-webkit-text-stroke:.5px #dcdcdc;">Поделиться</div>
<svg class="a" style="left:1172.5px;top:949.5px;" width="36" height="35" viewBox="0 0 36 35"><circle cx="25" cy="9" r="6.2" fill="none" stroke="#fff" stroke-width="1.9"/><circle cx="9" cy="25" r="6.2" fill="none" stroke="#fff" stroke-width="1.9"/><path d="M2.4 14.5 V9 C2.4 5 5 2.6 9 2.6 H14.5 M33 20 V25.6 C33 29.6 30.4 32 26.4 32 H21" fill="none" stroke="#fff" stroke-width="1.9" stroke-linecap="round"/></svg>
<div class="t" style="left:1134.20px;top:994px;font-size:17.6px;line-height:18px;color:#dcdcdc;letter-spacing:0.914px;-webkit-text-stroke:.5px #dcdcdc;">Приложения</div>
<svg class="a" style="left:1328px;top:951px;" width="40" height="32" viewBox="0 0 40 32"><path d="M16 27.4 H7 C4 27.4 2.4 25.6 2.4 23 V6.6 C2.4 3.8 4 2.2 7 2.2 H32.4 C35.2 2.2 36.8 3.8 36.8 6.6 V20" fill="none" stroke="#fff" stroke-width="2" stroke-linecap="round"/><rect x="19.6" y="23.6" width="18.6" height="6.4" rx="3.2" fill="#fff"/></svg>
<div class="t" style="left:1270.40px;top:994px;font-size:17.6px;line-height:18px;color:#dcdcdc;letter-spacing:0.697px;-webkit-text-stroke:.5px #dcdcdc;">Доски сообщений</div>
<svg class="a" style="left:1500.5px;top:948px;" width="38" height="38" viewBox="0 0 38 38"><circle cx="19" cy="19" r="17.2" fill="none" stroke="#fff" stroke-width="2"/><circle cx="11.6" cy="19" r="2" fill="#fff"/><circle cx="19" cy="19" r="2" fill="#fff"/><circle cx="26.4" cy="19" r="2" fill="#fff"/></svg>
<div class="t" style="left:1451.70px;top:994px;font-size:17.6px;line-height:18px;color:#dcdcdc;letter-spacing:0.827px;-webkit-text-stroke:.5px #dcdcdc;">Дополнительно</div>
<svg class="a" style="left:1819px;top:947.5px;" width="40" height="38" viewBox="0 0 40 38"><path d="M16.5 2.6 L35.6 1.2 V28.6 L27 34.6 V8.6 L16.5 2.6 Z" fill="none" stroke="#f2184f" stroke-width="1.9" stroke-linejoin="round"/><path d="M27 8.6 V34.6" stroke="#f2184f" stroke-width="2.6"/><circle cx="14.6" cy="9.6" r="3.3" fill="none" stroke="#fff" stroke-width="1.8"/><path d="M9.5 16.5 C11 14.4 15 13.6 16.8 15.4 L19.8 20.4 L24 22 M12.8 16 L11.6 24.6 L16.6 28.6 L18.2 35 M11.4 25.4 L9 30.6 L4 35 M9.5 16.5 L5.6 20 L6 24.4" fill="none" stroke="#fff" stroke-width="1.9" stroke-linecap="round" stroke-linejoin="round"/></svg>
<div class="t" style="left:1810.80px;top:994px;font-size:17.6px;line-height:18px;color:#dcdcdc;letter-spacing:0.322px;-webkit-text-stroke:.5px #dcdcdc;">Выйти</div>
<!-- p_task -->
<div class="a" style="left:0px;top:1020px;width:1920px;height:60px;background:linear-gradient(90deg,#3c3c38 0px,#3e3e3a 500px,#454440 1000px,#3f3d3b 1200px,#332f32 1380px,#2d292d 1600px,#2c282c 1920px);"></div>
<svg class="a" style="left:23.5px;top:1037px;" width="25" height="25.5" viewBox="0 0 25 25.5"><path d="M0 3.6 L10.2 2.2 V12 H0 Z M11.6 2 L24.6 0.2 V12 H11.6 Z M0 13.4 H10.2 V23.2 L0 21.8 Z M11.6 13.4 H24.6 V25.2 L11.6 23.4 Z" fill="#fff"/></svg>
<div class="a" style="left:72px;top:1020.7px;width:432.3px;height:59.3px;background:#f2f2f2;border:1px solid #c9c9c9;border-bottom:none;box-sizing:border-box;"></div>
<svg class="a" style="left:89.3px;top:1036.6px;" width="26" height="26" viewBox="0 0 26 26"><circle cx="16" cy="9.6" r="8" fill="none" stroke="#222" stroke-width="1.7"/><path d="M10.2 15.4 L1.6 24" stroke="#222" stroke-width="1.8" stroke-linecap="round"/></svg>
<div class="t" style="left:132.90px;top:1040px;font-size:23.4px;line-height:24px;color:#2a2a2a;letter-spacing:-0.611px;">Пошук</div>
<svg class="a" style="left:385px;top:1021px" width="118" height="59" viewBox="385 1021 118 59"><defs><radialGradient id="cg" cx=".4" cy=".3" r=".8"><stop offset="0" stop-color="#fff" stop-opacity=".55"/><stop offset=".5" stop-color="#fff" stop-opacity="0"/></radialGradient></defs><path d="M430 1080 C432 1058 450 1046 470 1048 C480 1050 488 1062 500 1080 Z" fill="#ddd5c8"/><path d="M440 1080 C446 1064 456 1056 468 1056 C476 1060 484 1070 492 1080 Z" fill="#eeeae0"/><path d="M440 1031 C455 1024 478 1024 488 1034 L470 1040 Z" fill="#f25a7a"/><path d="M450 1029 C462 1027 470 1030 478 1033" stroke="#fbd0d8" stroke-width="1.5" fill="none"/><ellipse cx="400" cy="1052" rx="13" ry="10" fill="#f0416a"/><ellipse cx="400" cy="1052" rx="13" ry="10" fill="url(#cg)"/><ellipse cx="411" cy="1042" rx="10" ry="8" fill="#c9d86a"/><ellipse cx="411" cy="1042" rx="10" ry="8" fill="url(#cg)"/><ellipse cx="424" cy="1037" rx="9" ry="7" fill="#f2527a"/><ellipse cx="424" cy="1037" rx="9" ry="7" fill="url(#cg)"/><ellipse cx="436" cy="1034" rx="8" ry="6" fill="#f27850"/><ellipse cx="436" cy="1034" rx="8" ry="6" fill="url(#cg)"/><ellipse cx="446" cy="1033" rx="7" ry="5.5" fill="#b85a9a"/><ellipse cx="446" cy="1033" rx="7" ry="5.5" fill="url(#cg)"/><ellipse cx="455" cy="1033" rx="6" ry="5" fill="#f0604a"/><ellipse cx="455" cy="1033" rx="6" ry="5" fill="url(#cg)"/><ellipse cx="412" cy="1056" rx="14" ry="11" fill="#f36a9a"/><ellipse cx="412" cy="1056" rx="14" ry="11" fill="url(#cg)"/><ellipse cx="427" cy="1066" rx="17" ry="14" fill="#ee3868"/><ellipse cx="427" cy="1066" rx="17" ry="14" fill="url(#cg)"/><ellipse cx="470" cy="1050" rx="11" ry="10" fill="#c0509a"/><ellipse cx="470" cy="1050" rx="11" ry="10" fill="url(#cg)"/><ellipse cx="482" cy="1060" rx="13" ry="12" fill="#ee3060"/><ellipse cx="482" cy="1060" rx="13" ry="12" fill="url(#cg)"/><ellipse cx="466" cy="1040" rx="9" ry="6" fill="#f0705a"/><ellipse cx="466" cy="1040" rx="9" ry="6" fill="url(#cg)"/></svg>
<svg class="a" style="left:527px;top:1036.5px;" width="26" height="25" viewBox="0 0 26 25"><rect x="3" y="5.6" width="13.6" height="13.6" fill="none" stroke="#fff" stroke-width="1.5"/><path d="M1 1 H19 M1 23.6 H19 M1 1 V3.6 M19 1 V3.6 M1 23.6 V21 M19 23.6 V21" stroke="#fff" stroke-width="1.4" fill="none"/><path d="M23.6 1 V7 M23.6 17.6 V23.6" stroke="#fff" stroke-width="1.5"/><rect x="22.6" y="10.2" width="2.2" height="4.4" fill="#fff"/></svg>
<svg class="a" style="left:599.5px;top:1035px;" width="34" height="30" viewBox="0 0 34 30"><path d="M1 4 C1 2.6 1.8 2 3 2 H11 L14.4 5.4 H31 C32.4 5.4 33 6.2 33 7.4 V10 H1 Z" fill="#e8a618"/><rect x="1" y="8.4" width="32" height="17.6" rx="1.6" fill="#fbd25a"/><path d="M1 22 H33 V24.6 C33 25.6 32.4 26 31.6 26 H2.4 C1.6 26 1 25.6 1 24.6 Z" fill="#eeb52c"/><rect x="9" y="17" width="16" height="11.6" fill="#3c8fe0"/><rect x="12.4" y="21" width="9.2" height="7.8" fill="#f8d468"/></svg>
<svg class="a" style="left:673.5px;top:1031.5px;" width="38" height="37" viewBox="0 0 38 37"><defs><linearGradient id="e1" x1="0" y1="0" x2="1" y2="1"><stop offset="0" stop-color="#36c6d0"/><stop offset=".6" stop-color="#4cd26a"/><stop offset="1" stop-color="#9ae04a"/></linearGradient><linearGradient id="e2" x1="0" y1="0" x2="0" y2="1"><stop offset="0" stop-color="#1b8fd8"/><stop offset="1" stop-color="#0a55b0"/></linearGradient></defs><circle cx="19" cy="18.5" r="17.6" fill="url(#e2)"/><path d="M1.6 17 C3 6 12 .8 20 .9 C30 1 37 9 36.6 17.6 C36.4 23 32 26 27.6 25.6 C23 25.2 22.4 22 23.6 20 C25 17.6 24 12.6 18 12 C11 11.4 4 15 1.6 17 Z" fill="url(#e1)"/><path d="M9.4 22 C9 29 15 35 23 35.6 C17 36.6 4 33 2 21 C4.6 17 9 15.6 13 15.6 C10.6 17.4 9.5 19.6 9.4 22 Z" fill="#0c3f8c"/><path d="M13.6 21 C13 26 17 31.6 24 32.6 C28 33 31.6 31.6 34 29 C31 34 25 36.6 19 36 C12 35 8.4 28.6 9.4 22 C10 18.6 12.4 16 15.6 15 C14.4 16.6 13.8 18.6 13.6 21 Z" fill="#1565c0"/></svg>
<svg class="a" style="left:748px;top:1032px;" width="37" height="36" viewBox="0 0 37 36"><path d="M11.6 9 V5.6 C11.6 3.4 13 2 15 2 H22 C24 2 25.4 3.4 25.4 5.6 V9" fill="none" stroke="#3aa0e8" stroke-width="2"/><path d="M1 8.6 H36 V31 C36 33.4 34.6 35 32 35 H5 C2.4 35 1 33.4 1 31 Z" fill="#f4f4f4"/><rect x="10.6" y="13.4" width="7.2" height="7.2" fill="#f25022"/><rect x="19" y="13.4" width="7.2" height="7.2" fill="#7fba00"/><rect x="10.6" y="21.8" width="7.2" height="7.2" fill="#00a4ef"/><rect x="19" y="21.8" width="7.2" height="7.2" fill="#ffb900"/></svg>
<svg class="a" style="left:823.5px;top:1032px;" width="37" height="35" viewBox="0 0 37 35"><path d="M1 14 L18.5 1 L36 14 Z" fill="#0f5fb4"/><rect x="1" y="13.6" width="35" height="20.4" fill="#2a9cf0"/><path d="M1 13.6 L18.5 26 L36 13.6 V34 H1 Z" fill="#35b0f6"/><path d="M1 13.8 L18.5 25.6 L36 13.8 L30 10 H7 Z" fill="#e8f4fd"/><path d="M1 34 L36 16 V34 Z" fill="#1a86e0" opacity=".7"/></svg>
<svg class="a" style="left:898.5px;top:1034px;" width="38" height="32" viewBox="0 0 38 32"><path d="M1 14.6 L36.4 1 L30 29.6 L19.6 22 L14.4 27 L13.4 19 Z" fill="#2a9ee8"/><path d="M13.4 19 L30.6 6.6 L16.6 21 L14.4 27 Z" fill="#1b78c0"/></svg>
<div class="a" style="left:911.2px;top:1050px;width:42.7px;height:23.4px;background:#383735;border:1.3px solid #e9e9e9;border-radius:11.7px;box-sizing:border-box;"></div>
<div class="t" style="left:916.30px;top:1054px;font-size:16px;line-height:17px;color:#fff;letter-spacing:2.029px;">99+</div>
<svg class="a" style="left:973px;top:1031.5px;" width="38" height="38" viewBox="0 0 38 38"><circle cx="19" cy="19" r="18.2" fill="#fff"/><path d="M19 19 L3.24 9.9 A18.2 18.2 0 0 1 34.76 9.9 Z" fill="#e8402f"/><path d="M19 19 L34.76 9.9 A18.2 18.2 0 0 1 19 37.2 Z" fill="#fbc116"/><path d="M19 19 L19 37.2 A18.2 18.2 0 0 1 3.24 9.9 Z" fill="#2ba24c"/><path d="M19 10 H34.8 A18.2 18.2 0 0 1 19 37.2 L27 23.5 Z" fill="#fbc116"/><path d="M11 23.6 L3.24 9.9 A18.2 18.2 0 0 0 19 37.2 L26.9 23.6 Z" fill="#2ba24c"/><path d="M3.24 9.9 A18.2 18.2 0 0 1 34.76 9.9 H19 L11.2 14.4 Z" fill="#e8402f"/><circle cx="19" cy="19" r="9" fill="#fff"/><circle cx="19" cy="19" r="7.3" fill="#3b7ded"/></svg>
<div class="a" style="left:962px;top:1076.6px;width:47px;height:3.4px;background:#a6d0f7;"></div>
<div class="a" style="left:1009px;top:1076.6px;width:14px;height:3.4px;background:#86a8cc;"></div>
<div class="a" style="left:1030.7px;top:1020px;width:66.5px;height:60px;background:#6b6a65;"></div>
<div class="a" style="left:1097.2px;top:1020px;width:1.6px;height:60px;background:#4a4945;"></div>
<div class="a" style="left:1098.8px;top:1020px;width:5.6px;height:60px;background:#63625d;"></div>
<div class="a" style="left:1030.7px;top:1076.6px;width:66.5px;height:3.4px;background:#a6d0f7;"></div>
<div class="a" style="left:1098.8px;top:1076.6px;width:5.6px;height:3.4px;background:#86a8cc;"></div>
<div class="a" style="left:1049px;top:1031.8px;width:36px;height:36px;background:linear-gradient(160deg,#2a74ff,#0b5cff 50%,#0a50f0);border-radius:15px;"></div>
<div class="t" style="left:1054.20px;top:1044px;font-size:10.6px;line-height:12px;color:#fff;font-weight:700;letter-spacing:-0.625px;">zoom</div>
<div class="a" style="left:1105.6px;top:1020px;width:73.6px;height:60px;background:#575650;"></div>
<div class="a" style="left:1105.6px;top:1076.6px;width:73.6px;height:3.4px;background:#a6d0f7;"></div>
<svg class="a" style="left:1124px;top:1033.5px;" width="36" height="33" viewBox="0 0 36 33"><rect x="8" y=".6" width="27.4" height="31.6" rx="1.8" fill="#185abd"/><path d="M8 2.4 C8 1.2 8.8 .6 9.8 .6 H33.6 C34.6 .6 35.4 1.2 35.4 2.4 V8.6 H8 Z" fill="#41a5ee"/><rect x="8" y="8.6" width="27.4" height="7.9" fill="#2b7cd3"/><rect x="8" y="16.5" width="27.4" height="7.9" fill="#185abd"/><path d="M8 24.4 H35.4 V30.4 C35.4 31.6 34.6 32.2 33.6 32.2 H9.8 C8.8 32.2 8 31.6 8 30.4 Z" fill="#103f91"/><rect x=".2" y="7.6" width="17.8" height="17.8" rx="1.6" fill="#1e5fc0"/></svg>
<div class="t" style="left:1126.02px;top:1043px;font-size:15px;line-height:15px;color:#fff;font-weight:700;">W</div>
<div class="a" style="left:1307.4px;top:1035.4px;width:28.6px;height:28.6px;background:radial-gradient(circle at 35% 30%,#fbc02a,#f48a18 60%,#ee5a18);border-radius:50%;"></div>
<div class="a" style="left:1322.7px;top:1033.3px;width:16px;height:16px;background:#d0202a;border-radius:50%;"></div>
<div class="t" style="left:1327.22px;top:1036px;font-size:12.5px;line-height:12px;color:#fff;">1</div>
<div class="t" style="left:1352.70px;top:1042px;font-size:20px;line-height:20px;color:#fff;letter-spacing:-1.133px;">9°C</div>
<svg class="a" style="left:1422px;top:1044px;" width="20" height="11" viewBox="0 0 20 11"><path d="M1.4 9.8 L10 1.6 L18.6 9.8" fill="none" stroke="#fff" stroke-width="1.5"/></svg>
<svg class="a" style="left:1459px;top:1037.5px;" width="17" height="25" viewBox="0 0 17 25"><rect x="4" y=".8" width="9" height="15" rx="4.5" fill="#e6e6e6"/><path d="M1.4 11 C1.4 21 15.6 21 15.6 11 M8.5 18.6 V23 M4.6 23.4 H12.4" fill="none" stroke="#fff" stroke-width="1.2"/></svg>
<svg class="a" style="left:1491px;top:1040px;" width="26" height="18" viewBox="0 0 26 18"><rect x="6.4" y="6" width="17" height="10" fill="none" stroke="#fff" stroke-width="1.2"/><rect x="8.4" y="8" width="13" height="6" fill="#e6e6e6"/><rect x="23.6" y="8.6" width="1.8" height="4.8" fill="#fff"/><path d="M1.4 1 V3.4 M4.6 1 V3.4 M.4 3.6 H5.6 V6.6 C5.6 8 4.6 8.6 3 8.6 C1.4 8.6 .4 8 .4 6.6 Z M3 8.6 V12 H6" fill="none" stroke="#fff" stroke-width="1.1"/></svg>
<svg class="a" style="left:1527px;top:1038px;" width="26" height="25" viewBox="0 0 26 25"><path d="M1 3.4 L23 .8 V18.6 L1 21.6 Z" fill="none" stroke="#fff" stroke-width="1.3"/><path d="M8 10 C9 6.6 13.6 6 15.6 8.6 M15.8 6 V8.8 H13 M15.4 12.6 C14.4 16 9.8 16.6 7.8 14 M7.6 16.6 V13.8 H10.4" fill="none" stroke="#fff" stroke-width="1.1"/><circle cx="19" cy="19" r="5.6" fill="#f7941d"/></svg>
<svg class="a" style="left:1566.5px;top:1040px;" width="23" height="21" viewBox="0 0 23 21"><path d="M1.6 19.4 C2 9.4 9.4 2 20.4 1.6" fill="none" stroke="#fff" stroke-width="1.2"/><path d="M6.4 19.4 C6.8 12 12 6.8 20.4 6.4" fill="none" stroke="#fff" stroke-width="1.2"/><path d="M11.2 19.4 C11.6 14.6 15 11.4 20.4 11.2" fill="none" stroke="#b9b9b9" stroke-width="1.2"/><circle cx="18.6" cy="18" r="1.7" fill="#fff"/></svg>
<svg class="a" style="left:1599.5px;top:1040px;" width="25" height="19" viewBox="0 0 25 19"><path d="M1.4 6.6 H5.6 L10.8 1.4 V17.6 L5.6 12.4 H1.4 Z" fill="none" stroke="#fff" stroke-width="1.2" stroke-linejoin="round"/><path d="M13.8 6.6 C15.2 8.4 15.2 10.6 13.8 12.4 M16.8 4.4 C19.2 7.4 19.2 11.6 16.8 14.6" fill="none" stroke="#fff" stroke-width="1.2"/><path d="M19.8 2.2 C23.2 6.6 23.2 12.4 19.8 16.8" fill="none" stroke="#9a9a9a" stroke-width="1.2"/></svg>
<svg class="a" style="left:1642.5px;top:1039.5px;" width="22" height="22" viewBox="0 0 22 22"><path d="M4 20 C1.4 20 1 16 3.6 13.6 L13 3.6 C15 1.4 18.6 3.6 16.6 6.4 L8.4 17 C7 18.8 5.4 20 4 20 Z M10.6 6.2 L14.4 9.4 M13.6 10.4 C16 8.6 20 9.6 19.6 12.6 C19.2 15 16 15.6 14.4 17.6" fill="none" stroke="#fff" stroke-width="1.25" stroke-linecap="round" stroke-linejoin="round"/></svg>
<div class="t" style="left:1689.00px;top:1044px;font-size:16.8px;line-height:17px;color:#fff;letter-spacing:-1.853px;">ENG</div>
<div class="t" style="left:1765.00px;top:1028px;font-size:18px;line-height:18px;color:#fff;letter-spacing:-0.686px;">16:04</div>
<div class="t" style="left:1743.30px;top:1056px;font-size:18px;line-height:18px;color:#fff;letter-spacing:-0.488px;">17.10.2024</div>
<svg class="a" style="left:1857.5px;top:1037.6px;" width="26" height="26" viewBox="0 0 26 26"><path d="M.5 .5 H24.7 V19.4 H11.2 V24.6 L5.8 19.4 H.5 Z" fill="#fff"/><path d="M5.4 5.6 H19.6 M5.4 9.6 H19.6 M5.4 13.6 H14.4" stroke="#2d292d" stroke-width="1.1"/></svg>
<div class="a" style="left:1870px;top:1049.2px;width:23.6px;height:23.6px;background:#322e32;border:1.2px solid #8e8e8e;border-radius:50%;box-sizing:border-box;"></div>
<div class="t" style="left:1877.17px;top:1054px;font-size:17px;line-height:17px;color:#fff;font-weight:700;">7</div>
<div class="a" style="left:1912px;top:1020px;width:1px;height:60px;background:#8a868a;"></div>
</body></html>
